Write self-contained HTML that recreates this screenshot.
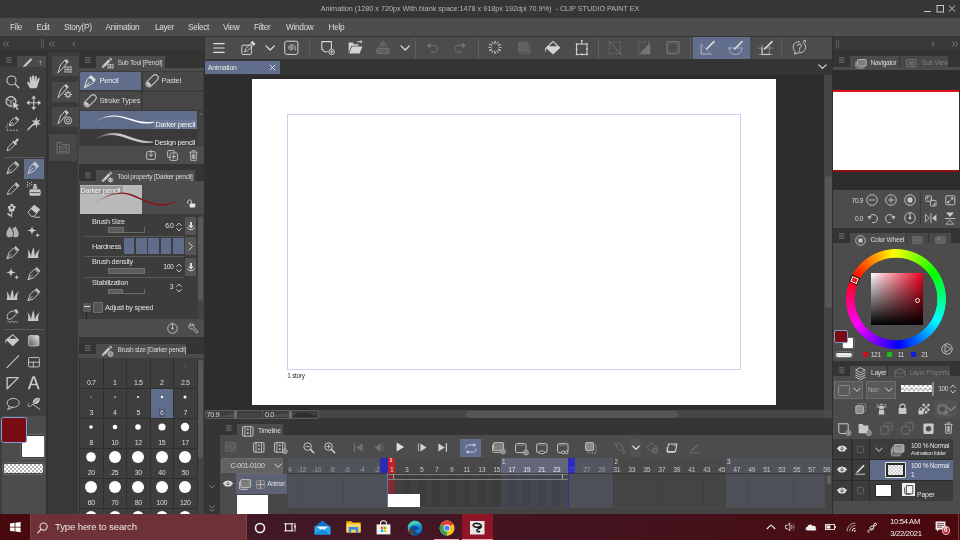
<!DOCTYPE html>
<html><head><meta charset="utf-8"><title>CLIP STUDIO PAINT EX</title>
<style>
html,body{margin:0;padding:0;}
body{width:960px;height:540px;overflow:hidden;background:#3c3c3c;font-family:"Liberation Sans",sans-serif;position:relative;}
#root{position:absolute;left:0;top:0;width:960px;height:540px;overflow:hidden;will-change:transform;}
#root div,#root svg{position:absolute;box-sizing:border-box;}
#root svg{overflow:visible;}
</style></head><body><div id="root">
<div style="left:0px;top:0px;width:960px;height:18px;background:#363636;"></div>
<div style="left:0px;top:4.2px;font-size:8.1px;line-height:10.1px;color:#b8b8b8;white-space:nowrap;width:960px;text-align:center;transform:scaleX(0.892);transform-origin:480px 0;">Animation (1280 x 720px With blank space:1478 x 918px 192dpi 70.9%)&nbsp; - CLIP STUDIO PAINT EX</div>
<svg style="left:919.5px;top:3px;" width="36" height="12" viewBox="0 0 36 12"><path d="M4 8.5h7" stroke="#c8c8c8" stroke-width="1" fill="none"/><rect x="17" y="2.5" width="6.5" height="6.5" fill="none" stroke="#c8c8c8" stroke-width="1"/><path d="M29 2.5l6 6M35 2.5l-6 6" stroke="#c8c8c8" stroke-width="1" fill="none"/></svg>
<div style="left:0px;top:18px;width:960px;height:18px;background:#4d4d4d;"></div>
<div style="left:10px;top:22px;font-size:8.3px;line-height:10.3px;color:#dcdcdc;white-space:nowrap;letter-spacing:-0.35px;">File</div>
<div style="left:36.5px;top:22px;font-size:8.3px;line-height:10.3px;color:#dcdcdc;white-space:nowrap;letter-spacing:-0.35px;">Edit</div>
<div style="left:64px;top:22px;font-size:8.3px;line-height:10.3px;color:#dcdcdc;white-space:nowrap;letter-spacing:-0.35px;">Story(P)</div>
<div style="left:105.5px;top:22px;font-size:8.3px;line-height:10.3px;color:#dcdcdc;white-space:nowrap;letter-spacing:-0.35px;">Animation</div>
<div style="left:155px;top:22px;font-size:8.3px;line-height:10.3px;color:#dcdcdc;white-space:nowrap;letter-spacing:-0.35px;">Layer</div>
<div style="left:188px;top:22px;font-size:8.3px;line-height:10.3px;color:#dcdcdc;white-space:nowrap;letter-spacing:-0.35px;">Select</div>
<div style="left:223px;top:22px;font-size:8.3px;line-height:10.3px;color:#dcdcdc;white-space:nowrap;letter-spacing:-0.35px;">View</div>
<div style="left:254px;top:22px;font-size:8.3px;line-height:10.3px;color:#dcdcdc;white-space:nowrap;letter-spacing:-0.35px;">Filter</div>
<div style="left:286px;top:22px;font-size:8.3px;line-height:10.3px;color:#dcdcdc;white-space:nowrap;letter-spacing:-0.35px;">Window</div>
<div style="left:328.5px;top:22px;font-size:8.3px;line-height:10.3px;color:#dcdcdc;white-space:nowrap;letter-spacing:-0.35px;">Help</div>
<div style="left:0px;top:36px;width:960px;height:24px;background:#383838;"></div>
<div style="left:0px;top:52px;width:46px;height:462px;background:#3e3e3e;"></div>
<div style="left:46px;top:52px;width:2px;height:462px;background:#323232;"></div>
<div style="left:0px;top:51.3px;width:204px;height:0.9px;background:#2f2f2f;"></div>
<div style="left:48px;top:52px;width:30px;height:462px;background:#383838;"></div>
<svg style="left:2.5px;top:41px;" width="6" height="6" viewBox="0 0 6 6"><path d="M2.5 0.5L0.5 3L2.5 5.5M5.5 0.5L3.5 3L5.5 5.5" stroke="#8a8a8a" stroke-width="0.8" fill="none"/></svg>
<svg style="left:49px;top:41px;" width="6" height="6" viewBox="0 0 6 6"><path d="M2.5 0.5L0.5 3L2.5 5.5M5.5 0.5L3.5 3L5.5 5.5" stroke="#8a8a8a" stroke-width="0.8" fill="none"/></svg>
<svg style="left:72px;top:41px;" width="4" height="6" viewBox="0 0 4 6"><path d="M3 0.5L1 3L3 5.5" stroke="#8a8a8a" stroke-width="0.8" fill="none"/></svg>
<div style="left:40.5px;top:39px;width:1.2px;height:9px;background:#5a5a5a;"></div>
<div style="left:42.5px;top:39px;width:1.2px;height:9px;background:#5a5a5a;"></div>
<div style="left:0px;top:52px;width:46px;height:15px;background:#343434;"></div>
<div style="left:17px;top:56px;width:29px;height:11px;background:#4b4b4b;"></div>
<svg style="left:6px;top:57px;" width="6" height="6" viewBox="0 0 6 6"><path d="M0 0.8h5.5M0 3h5.5M0 5.2h5.5" stroke="#8c8c8c" stroke-width="0.7" fill="none"/></svg>
<svg style="left:22px;top:56.5px;" width="11" height="11" viewBox="0 0 11 11"><path d="M2.5 9 L9.5 2" stroke="#c8c8c8" stroke-width="2.2" fill="none"/><path d="M0.8 10.4 L2 8 L3.2 9.3 Z" fill="#c8c8c8"/></svg>
<div style="left:38.5px;top:58.5px;font-size:6px;line-height:8px;color:#b0b0b0;white-space:nowrap;width:3.5px;overflow:hidden;">T</div>
<div style="left:24px;top:159px;width:20px;height:19.5px;background:#626f8c;"></div>
<div style="left:4px;top:157px;width:39.5px;height:1px;background:#5c5c5c;"></div>
<div style="left:4px;top:329px;width:39.5px;height:1px;background:#5c5c5c;"></div>
<svg style="left:4.75px;top:74.25px;" width="15.5" height="15.5" viewBox="0 0 18 18"><path d="M12 12 L16 16" fill="none" stroke="#c8c8c8" stroke-width="1.6" stroke-linecap="round" stroke-linejoin="round"/><circle cx="7.5" cy="7.5" r="5.3" fill="none" stroke="#c8c8c8" stroke-width="1.2"/></svg>
<svg style="left:26.25px;top:74.25px;" width="15.5" height="15.5" viewBox="0 0 18 18"><path d="M4.5 16.5 C3 13.5 1.5 11 1.2 9.2 C2.2 8.4 3.4 9 4.6 11 L4.2 3.6 C5 2.6 6 2.8 6.3 3.8 L6.9 8 L7.2 2.2 C8 1.2 9.2 1.4 9.5 2.4 L9.6 8 L10.6 2.8 C11.5 2 12.5 2.3 12.7 3.4 L12.1 8.8 L14 5 C15 4.4 15.8 5 15.8 6 L13.8 12.5 C13.4 14.5 12.8 15.5 12 16.5 Z" fill="#c8c8c8"/></svg>
<svg style="left:4.75px;top:95.25px;" width="15.5" height="15.5" viewBox="0 0 18 18"><path d="M7 2 L12 4.5 L12 10 M7 2 L2 4.5 L2 10.5 L7 13 L7 7.5 L2 4.5 M7 7.5 L12 4.5" fill="none" stroke="#c8c8c8" stroke-width="1" stroke-linecap="round" stroke-linejoin="round"/><circle cx="7" cy="7.5" r="6" fill="none" stroke="#c8c8c8" stroke-width="0.9"/><path d="M9 8.5 L16.5 12 L13.5 13 L15.5 16.5 L14 17.3 L12 13.8 L10 16 Z" fill="#c8c8c8"/></svg>
<svg style="left:26.25px;top:95.25px;" width="15.5" height="15.5" viewBox="0 0 18 18"><path d="M9 2 L9 16 M2 9 L16 9" fill="none" stroke="#c8c8c8" stroke-width="1.3" stroke-linecap="round" stroke-linejoin="round"/><path d="M9 0.5 L11.8 4 L6.2 4 Z M9 17.5 L11.8 14 L6.2 14 Z M0.5 9 L4 6.2 L4 11.8 Z M17.5 9 L14 6.2 L14 11.8 Z" fill="#c8c8c8"/></svg>
<svg style="left:4.75px;top:116.25px;" width="15.5" height="15.5" viewBox="0 0 18 18"><path d="M5 11 L6.5 6 L11 2 L15 6 L10.5 10 Z M5 11 L9 7.5" fill="none" stroke="#c8c8c8" stroke-width="1.1" stroke-linecap="round" stroke-linejoin="round"/><path d="M11.6 1.6 L13 0.4 L16.6 4 L15.4 5.4 Z" fill="#c8c8c8"/><path d="M2 16.5 L16 16.5" stroke="#c8c8c8" stroke-width="1.1" stroke-dasharray="2 1.6" fill="none"/><path d="M3.5 9 C1.5 11 1.5 14 3.5 15" stroke="#c8c8c8" stroke-width="1" stroke-dasharray="1.6 1.4" fill="none"/></svg>
<svg style="left:26.25px;top:116.25px;" width="15.5" height="15.5" viewBox="0 0 18 18"><path d="M2 16 L9 9" fill="none" stroke="#c8c8c8" stroke-width="1.5" stroke-linecap="round" stroke-linejoin="round"/><path d="M12 1 L13 5.5 L17 4 L14.2 7.5 L17.5 10 L13.2 10 L12.5 14 L11 10.2 L7 11.5 L9.8 8 L6.5 5 L10.8 5.6 Z" fill="#c8c8c8"/></svg>
<svg style="left:4.75px;top:137.25px;" width="15.5" height="15.5" viewBox="0 0 18 18"><path d="M2.5 15.5 L3.5 12 L9.5 6 L12 8.5 L6 14.5 Z" fill="none" stroke="#c8c8c8" stroke-width="1.1" stroke-linecap="round" stroke-linejoin="round"/><path d="M8.5 5.5 L10 4 L11.2 5.2 L13.5 2 C14.8 1 16.5 2.6 15.6 4 L12.8 6.8 L14 8 L12.5 9.5 Z" fill="#c8c8c8"/></svg>
<svg style="left:4.75px;top:160.25px;" width="15.5" height="15.5" viewBox="0 0 18 18"><path d="M2.5 15.5 L4.5 9 L10 3.5 L14.5 8 L9 13.5 Z M2.5 15.5 L7 11" fill="none" stroke="#c8c8c8" stroke-width="1.1" stroke-linecap="round" stroke-linejoin="round"/><path d="M10.6 2.9 L12.3 1.2 L16.8 5.7 L15.1 7.4 Z" fill="#c8c8c8"/></svg>
<svg style="left:26.25px;top:160.25px;" width="15.5" height="15.5" viewBox="0 0 18 18"><path d="M2.5 15.5 L5.5 7 L10.5 2.5 L14.5 7 L9.5 12.5 Z M2.5 15.5 L8 9.5" fill="none" stroke="#c8c8c8" stroke-width="1.1" stroke-linecap="round" stroke-linejoin="round"/><path d="M7.2 5.5 L10.5 2.5 L14.5 7 L11.5 10.2 L10.6 6.8 Z" fill="#c8c8c8"/></svg>
<svg style="left:4.75px;top:181.25px;" width="15.5" height="15.5" viewBox="0 0 18 18"><path d="M3 15.5 C3 12 5 10 7 8.5 L11 4 L14.5 7.5 L10 11.5 C8.5 13.5 6.5 15.5 3 15.5 Z" fill="none" stroke="#c8c8c8" stroke-width="1.1" stroke-linecap="round" stroke-linejoin="round"/><path d="M11.2 3.2 L13 1.4 L17 5.4 L15.2 7.2 Z" fill="#c8c8c8"/></svg>
<svg style="left:26.25px;top:181.25px;" width="15.5" height="15.5" viewBox="0 0 18 18"><path d="M6 9.5 L15 9.5 C16.5 9.5 17 10.5 17 12 L17 15.5 C17 16.5 16.5 17 15.5 17 L5.5 17 C4.5 17 4 16.5 4 15.5 L4 12 C4 10.5 4.5 9.5 6 9.5 Z M8 6.5 L13 6.5 L13 9 L8 9 Z M9 3.5 L12 3.5 L12 6 L9 6 Z" fill="#c8c8c8"/><path d="M5 13.5 L16 13.5" stroke="#3e3e3e" stroke-width="1"/><path d="M1 1 h1.2v1.2h-1.2z M3.5 2.2 h1.2v1.2h-1.2z M1 3.6 h1.2v1.2h-1.2z M6 3.4 h1.2v1.2h-1.2z M3.5 4.8 h1.2v1.2h-1.2z M1 6.2 h1.2v1.2h-1.2z M6 1 h1.2v1.2h-1.2z" fill="#c8c8c8"/></svg>
<svg style="left:4.75px;top:202.75px;" width="15.5" height="15.5" viewBox="0 0 18 18"><path d="M8 1 C9.5 1 10 2.5 9.6 3.6 C10.8 2.8 12.4 3.4 12.4 5 C12.4 6.4 11.2 6.8 10.2 6.8 C11.4 7.6 11.4 9.4 10 9.9 C8.8 10.3 8 9.4 7.7 8.6 C7.4 9.8 6 10.6 4.9 9.7 C3.9 8.8 4.4 7.6 5.2 7 C4 7 2.9 6 3.3 4.7 C3.8 3.4 5.2 3.4 6.2 3.8 C5.6 2.6 6.4 1 8 1 Z" fill="#c8c8c8"/><circle cx="7.8" cy="5.6" r="1.5" fill="#3e3e3e"/><path d="M7.8 10 L7.8 16" fill="none" stroke="#c8c8c8" stroke-width="1.2" stroke-linecap="round" stroke-linejoin="round"/><path d="M7.5 15.5 C5 15.5 3 14 2.5 11.5 C5 11.5 7 13 7.5 15.5 Z" fill="#c8c8c8"/></svg>
<svg style="left:26.25px;top:202.75px;" width="15.5" height="15.5" viewBox="0 0 18 18"><path d="M2.5 10.5 L9.5 2.5 L16 7.5 L9.5 15.5 L6.5 15.5 Z M10 16.5 L16 16.5" fill="none" stroke="#c8c8c8" stroke-width="1.1" stroke-linecap="round" stroke-linejoin="round"/><path d="M5.5 7 L9.5 2.5 L16 7.5 L12 12.3 Z" fill="#c8c8c8"/></svg>
<svg style="left:4.75px;top:223.75px;" width="15.5" height="15.5" viewBox="0 0 18 18"><path d="M5.5 3 C7.5 6 9.5 8.5 9.5 11.5 C9.5 14 7.7 15.5 5.5 15.5 C3.3 15.5 1.5 14 1.5 11.5 C1.5 8.5 3.5 6 5.5 3 Z M12 3 C14 6 16 8.5 16 11.5 C16 14 14.2 15.5 12 15.5 C10.8 15.5 9.8 15 9.2 14.3 C10 13.5 10.4 12.6 10.4 11.5 C10.4 9.3 9.6 7.4 8.6 5.8 C10 4.4 11 3.8 12 3 Z" fill="#b0b0b0"/></svg>
<svg style="left:26.25px;top:223.75px;" width="15.5" height="15.5" viewBox="0 0 18 18"><path d="M7 1.5 C7.5 6 8.5 7 13 7.5 C8.5 8 7.5 9 7 13.5 C6.5 9 5.5 8 1 7.5 C5.5 7 6.5 6 7 1.5 Z M13.5 10 C13.8 12.2 14.3 12.7 16.5 13 C14.3 13.3 13.8 13.8 13.5 16 C13.2 13.8 12.7 13.3 10.5 13 C12.7 12.7 13.2 12.2 13.5 10 Z" fill="#c8c8c8"/></svg>
<svg style="left:4.75px;top:244.75px;" width="15.5" height="15.5" viewBox="0 0 18 18"><path d="M2.5 15.5 L4.5 9 L10 3.5 L14.5 8 L9 13.5 Z M2.5 15.5 L7 11" fill="none" stroke="#c8c8c8" stroke-width="1.1" stroke-linecap="round" stroke-linejoin="round"/><path d="M10.6 2.9 L12.3 1.2 L16.8 5.7 L15.1 7.4 Z" fill="#c8c8c8"/></svg>
<svg style="left:26.25px;top:244.75px;" width="15.5" height="15.5" viewBox="0 0 18 18"><path d="M2 15 C3 11 3 8 1.5 5 C4.5 7.5 5.5 11 5.8 14 C6.2 10 7 6 9 2.5 C9.5 6.5 10 10 10.4 14 C11 10.5 12.5 7.5 16 5 C14 8.5 13.8 11.5 14.5 15 Z" fill="#c8c8c8"/></svg>
<svg style="left:4.75px;top:265.75px;" width="15.5" height="15.5" viewBox="0 0 18 18"><path d="M7 1.5 C7.5 6 8.5 7 13 7.5 C8.5 8 7.5 9 7 13.5 C6.5 9 5.5 8 1 7.5 C5.5 7 6.5 6 7 1.5 Z M13.5 10 C13.8 12.2 14.3 12.7 16.5 13 C14.3 13.3 13.8 13.8 13.5 16 C13.2 13.8 12.7 13.3 10.5 13 C12.7 12.7 13.2 12.2 13.5 10 Z" fill="#c8c8c8"/></svg>
<svg style="left:26.25px;top:265.75px;" width="15.5" height="15.5" viewBox="0 0 18 18"><path d="M2.5 15.5 L4.5 9 L10 3.5 L14.5 8 L9 13.5 Z M2.5 15.5 L7 11" fill="none" stroke="#c8c8c8" stroke-width="1.1" stroke-linecap="round" stroke-linejoin="round"/><path d="M10.6 2.9 L12.3 1.2 L16.8 5.7 L15.1 7.4 Z" fill="#c8c8c8"/></svg>
<svg style="left:4.75px;top:286.75px;" width="15.5" height="15.5" viewBox="0 0 18 18"><path d="M2 15 C3 11 3 8 1.5 5 C4.5 7.5 5.5 11 5.8 14 C6.2 10 7 6 9 2.5 C9.5 6.5 10 10 10.4 14 C11 10.5 12.5 7.5 16 5 C14 8.5 13.8 11.5 14.5 15 Z" fill="#c8c8c8"/></svg>
<svg style="left:26.25px;top:286.75px;" width="15.5" height="15.5" viewBox="0 0 18 18"><path d="M2.5 15.5 L4.5 9 L10 3.5 L14.5 8 L9 13.5 Z M2.5 15.5 L7 11" fill="none" stroke="#c8c8c8" stroke-width="1.1" stroke-linecap="round" stroke-linejoin="round"/><path d="M10.6 2.9 L12.3 1.2 L16.8 5.7 L15.1 7.4 Z" fill="#c8c8c8"/></svg>
<svg style="left:4.75px;top:307.75px;" width="15.5" height="15.5" viewBox="0 0 18 18"><path d="M3 12.5 C1.5 9.5 3 5.5 7 4.2 L11 3 L13.5 6.5 L10 10.5 C7.5 13.2 4.5 13.8 3 12.5 Z" fill="none" stroke="#c8c8c8" stroke-width="1.1" stroke-linecap="round" stroke-linejoin="round"/><path d="M11.2 2.6 L12.8 0.8 L16 4.8 L14 6.4 Z" fill="#c8c8c8"/><path d="M3 16 q1 -2 2 0 t2 0 t2 0 t2 0 t2 0 t2 0" stroke="#c8c8c8" stroke-width="0.9" fill="none"/></svg>
<svg style="left:26.25px;top:307.75px;" width="15.5" height="15.5" viewBox="0 0 18 18"><path d="M2 15 C3 11 3 8 1.5 5 C4.5 7.5 5.5 11 5.8 14 C6.2 10 7 6 9 2.5 C9.5 6.5 10 10 10.4 14 C11 10.5 12.5 7.5 16 5 C14 8.5 13.8 11.5 14.5 15 Z" fill="#c8c8c8"/></svg>
<svg style="left:4.75px;top:333.25px;" width="15.5" height="15.5" viewBox="0 0 18 18"><path d="M9 1.2 L16.5 8.2 L9 15.5 L1.8 8.6 C1 10 0.8 11.5 1.6 13 C-0.4 11 -0.2 8.6 1.5 7.4 Z" fill="#c8c8c8"/><path d="M9 2.6 L5 6.6 L13.2 6.6 Z" fill="#3e3e3e"/></svg>
<svg style="left:26.25px;top:333.25px;" width="15.5" height="15.5" viewBox="0 0 18 18"><defs><linearGradient id="gsq" x1="1" y1="0" x2="0" y2="1"><stop offset="0" stop-color="#e8e8e8"/><stop offset="1" stop-color="#555"/></linearGradient></defs><rect x="3" y="3" width="12" height="12" rx="1.5" fill="url(#gsq)" stroke="#c8c8c8" stroke-width="1"/></svg>
<svg style="left:4.75px;top:354.25px;" width="15.5" height="15.5" viewBox="0 0 18 18"><path d="M2 16 L16 2" fill="none" stroke="#c8c8c8" stroke-width="1.2" stroke-linecap="round" stroke-linejoin="round"/></svg>
<svg style="left:26.25px;top:354.25px;" width="15.5" height="15.5" viewBox="0 0 18 18"><rect x="3" y="4" width="12.5" height="11" rx="1.2" fill="none" stroke="#c8c8c8" stroke-width="1.1"/><path d="M3 9.5 L15.5 9.5 M8.5 9.5 L8.5 15" fill="none" stroke="#c8c8c8" stroke-width="1.1" stroke-linecap="round" stroke-linejoin="round"/></svg>
<svg style="left:4.75px;top:375.25px;" width="15.5" height="15.5" viewBox="0 0 18 18"><path d="M2.5 3 L15.5 3 L2.5 16 Z" fill="none" stroke="#c8c8c8" stroke-width="1.5" stroke-linecap="round" stroke-linejoin="round"/></svg>
<svg style="left:26.25px;top:375.25px;" width="15.5" height="15.5" viewBox="0 0 18 18"><path d="M7.6 1.5 L10.4 1.5 L16 16.5 L13.6 16.5 L12 12 L6 12 L4.4 16.5 L2 16.5 Z M6.7 10.2 L11.3 10.2 L9 3.6 Z" fill="#c8c8c8"/></svg>
<svg style="left:4.75px;top:396.25px;" width="15.5" height="15.5" viewBox="0 0 18 18"><ellipse cx="9.5" cy="8" rx="7" ry="5.2" fill="none" stroke="#c8c8c8" stroke-width="1.1"/><path d="M5 12 L3 16 L9 13" fill="none" stroke="#c8c8c8" stroke-width="1.1" stroke-linecap="round" stroke-linejoin="round"/></svg>
<svg style="left:26.25px;top:396.25px;" width="15.5" height="15.5" viewBox="0 0 18 18"><path d="M3 9 C1.5 11 3 13 5 12 L8 9.5 M8.5 10 L16 15.5" fill="none" stroke="#c8c8c8" stroke-width="1.1" stroke-linecap="round" stroke-linejoin="round"/><path d="M8 8.5 C7.5 5 10 2 14.5 2 C16 2 16.5 3 16 4.5 C15 8.5 12 10.5 8 8.5 Z" fill="#c8c8c8"/><path d="M9 8 L15 3" stroke="#3e3e3e" stroke-width="0.7"/></svg>
<div style="left:1.5px;top:416px;width:44.5px;height:98px;background:#4c4c4c;"></div>
<div style="left:19.7px;top:433.8px;width:25.2px;height:24.8px;background:#3a3a3a;border:0.8px solid #646464;border-radius:2px;"></div>
<div style="left:21.8px;top:436px;width:22px;height:21.4px;background:#ffffff;border-radius:1px;"></div>
<div style="left:1.2px;top:416.6px;width:25.8px;height:26.1px;background:#7a0c14;border:1.7px solid #829fda;border-radius:2.5px;"></div>
<div style="left:2px;top:461.5px;width:43px;height:13.8px;background:#4c4c4c;border:0.8px solid #626262;border-radius:3px;"></div>
<div style="left:4px;top:464px;width:39px;height:9px;background:#ffffff;border-radius:1.5px;background-image:conic-gradient(#b4b4b4 25%,#fff 0 50%,#b4b4b4 0 75%,#fff 0);background-size:4px 4px;"></div>
<div style="left:48px;top:52px;width:30px;height:79px;background:#3a3a3a;"></div>
<div style="left:52px;top:56px;width:26px;height:20px;background:#484848;border-radius:2px 0 0 2px;"></div>
<div style="left:52px;top:81.5px;width:26px;height:20px;background:#484848;border-radius:2px 0 0 2px;"></div>
<div style="left:52px;top:107px;width:26px;height:20px;background:#484848;border-radius:2px 0 0 2px;"></div>
<svg style="left:56px;top:57.5px;" width="18" height="17" viewBox="0 0 18 17"><path d="M2 14.5 L4.5 7 L8.5 2.5 L11 5 L6 11 Z" fill="none" stroke="#c8c8c8" stroke-width="1.0" stroke-linecap="round" stroke-linejoin="round"/><path d="M8.5 2.5 L10 1 L13 4 L11 5.2 Z" fill="#c8c8c8"/><path d="M9 8.5 L9 14 M9 9 L15 9 M9 11.5 L15 11.5 M9 14 L15 14 M12 9 L12 14 M15 8.5 L15 14.5" fill="none" stroke="#c8c8c8" stroke-width="0.8" stroke-linecap="round" stroke-linejoin="round"/></svg>
<svg style="left:56px;top:83px;" width="18" height="17" viewBox="0 0 18 17"><path d="M2 14.5 L4.5 7 L8.5 2.5 L11 5 L6 11 Z" fill="none" stroke="#c8c8c8" stroke-width="1.0" stroke-linecap="round" stroke-linejoin="round"/><path d="M8.5 2.5 L10 1 L13 4 L11 5.2 Z" fill="#c8c8c8"/><circle cx="12" cy="11.5" r="2.3" fill="none" stroke="#c8c8c8" stroke-width="1"/><path d="M12 7.5v8M8 11.5h8M9.2 8.7l5.6 5.6M14.8 8.7l-5.6 5.6" stroke="#c8c8c8" stroke-width="0.9"/><circle cx="12" cy="11.5" r="1.3" fill="#484848"/></svg>
<svg style="left:56px;top:108.5px;" width="18" height="17" viewBox="0 0 18 17"><path d="M2 14.5 L4.5 7 L8.5 2.5 L11 5 L6 11 Z" fill="none" stroke="#c8c8c8" stroke-width="1.0" stroke-linecap="round" stroke-linejoin="round"/><path d="M8.5 2.5 L10 1 L13 4 L11 5.2 Z" fill="#c8c8c8"/><circle cx="12" cy="11.5" r="3.6" fill="none" stroke="#c8c8c8" stroke-width="0.9"/><circle cx="12" cy="11.5" r="1.6" fill="none" stroke="#c8c8c8" stroke-width="0.9"/></svg>
<div style="left:49px;top:134px;width:28px;height:27px;background:#474747;"></div>
<svg style="left:56px;top:141px;" width="14" height="13" viewBox="0 0 14 13"><path d="M1 3.5 L1 1.5 L5 1.5 L6 3.5 L13 3.5 L13 12 L1 12 Z" fill="none" stroke="#707070" stroke-width="1"/><rect x="3.5" y="5.5" width="7" height="5" fill="none" stroke="#707070" stroke-width="0.8"/><path d="M3.5 7.5h7M6 7.5v3" stroke="#707070" stroke-width="0.7"/></svg>
<div style="left:78px;top:52px;width:126px;height:462px;background:#3c3c3c;"></div>
<div style="left:78px;top:52px;width:1px;height:462px;background:#4a4a4a;"></div>
<div style="left:79px;top:52px;width:125px;height:16px;background:#343434;"></div>
<svg style="left:85px;top:57px;" width="6" height="6" viewBox="0 0 6 6"><path d="M0 0.8h5.5M0 3h5.5M0 5.2h5.5" stroke="#8c8c8c" stroke-width="0.7" fill="none"/></svg>
<div style="left:96px;top:56.3px;width:68.5px;height:12px;background:#4c4c4c;"></div>
<div style="left:79px;top:67.5px;width:125px;height:3.3px;background:#4c4c4c;"></div>
<svg style="left:101px;top:57px;" width="13" height="12" viewBox="0 0 13 12"><path d="M0.6 11.2 L1.8 7.8 L3.9 9.9 Z" fill="#c8c8c8"/><path d="M3 8.8 L8.6 3.2" stroke="#c8c8c8" stroke-width="2.6"/><path d="M8.3 1.5 L9.3 0.5 L11.3 2.5 L10.3 3.5 Z" fill="#c8c8c8"/><path d="M7 7 L7 11 M7 7.5 L12 7.5 M7 9.3 L12 9.3 M7 11 L12 11 M9.5 7.5 L9.5 11 M12 7 L12 11.3" fill="none" stroke="#c8c8c8" stroke-width="0.7" stroke-linecap="round" stroke-linejoin="round"/></svg>
<div style="left:117.5px;top:59px;font-size:6.6px;line-height:8.6px;color:#d6d6d6;white-space:nowrap;letter-spacing:-0.25px;">Sub Tool [Pencil]</div>
<div style="left:80.3px;top:71.7px;width:60.7px;height:18.3px;background:#626f8c;border-radius:1.5px;"></div>
<div style="left:142.5px;top:71.7px;width:60px;height:18.3px;background:#484848;border-radius:1.5px;"></div>
<div style="left:80.3px;top:91.7px;width:60.7px;height:18.3px;background:#484848;border-radius:1.5px;"></div>
<div style="left:142.5px;top:91.7px;width:60.5px;height:18.3px;background:#464646;"></div>
<svg style="left:82.5px;top:73.5px;" width="14" height="15" viewBox="0 0 14 15"><path d="M1.5 13.5 L4 5.5 L8 1.5 L12.5 6 L8.5 10 Z M1.5 13.5 L6.5 8.5" fill="none" stroke="#e0e0e0" stroke-width="1.0" stroke-linecap="round" stroke-linejoin="round"/><path d="M5.6 4 L8 1.5 L12.5 6 L10 8.6 L9.2 5.6 Z" fill="#e0e0e0"/></svg>
<div style="left:99.5px;top:76.3px;font-size:7.5px;line-height:9.5px;color:#e8e8e8;white-space:nowrap;letter-spacing:-0.25px;">Pencil</div>
<svg style="left:145px;top:73.8px;" width="14" height="14" viewBox="0 0 14 14"><g transform="rotate(-45 7 7)"><rect x="0" y="4" width="14.5" height="6" rx="3" fill="none" stroke="#c8c8c8" stroke-width="1"/><ellipse cx="2.6" cy="7" rx="1.6" ry="2.5" fill="#c8c8c8"/></g></svg>
<div style="left:161.5px;top:76.3px;font-size:7.5px;line-height:9.5px;color:#d8d8d8;white-space:nowrap;letter-spacing:-0.25px;">Pastel</div>
<svg style="left:83px;top:93.8px;" width="14" height="14" viewBox="0 0 14 14"><g transform="rotate(-45 7 7)"><rect x="0" y="4" width="14.5" height="6" rx="3" fill="none" stroke="#c8c8c8" stroke-width="1"/><ellipse cx="2.6" cy="7" rx="1.6" ry="2.5" fill="#c8c8c8"/></g></svg>
<div style="left:99.5px;top:96px;font-size:7.5px;line-height:9.5px;color:#d8d8d8;white-space:nowrap;letter-spacing:-0.25px;">Stroke Types</div>
<div style="left:80px;top:111.3px;width:117px;height:17.5px;background:#606d8a;"></div>
<div style="left:80px;top:130px;width:117px;height:16px;background:#3a3a3a;"></div>
<div style="left:197.5px;top:111px;width:6.5px;height:35px;background:#424242;"></div>
<div style="left:199.5px;top:113px;width:2px;height:2px;background:#6a6a6a;border-radius:1px;"></div>
<svg style="left:80px;top:111px;" width="117" height="18" viewBox="0 0 117 18"><defs><linearGradient id="fa" x1="0" y1="0" x2="1" y2="0"><stop offset="0" stop-color="#fff" stop-opacity="0.15"/><stop offset="0.3" stop-color="#fff" stop-opacity="1"/><stop offset="0.8" stop-color="#fff" stop-opacity="1"/><stop offset="1" stop-color="#fff" stop-opacity="0.3"/></linearGradient></defs><path d="M12 12 C20 7.5 27 5.2 34 5.4 C44 5.8 54 11.4 64 12.4 C72 13 78 11 84 8 C78 10.4 72 11.6 64 10.8 C54 9.6 44 4.4 34 4.4 C27 4.4 20 7 12 12 Z" fill="url(#fa)"/></svg>
<svg style="left:80px;top:129.5px;" width="117" height="18" viewBox="0 0 117 18"><defs><linearGradient id="fb" x1="0" y1="0" x2="1" y2="0"><stop offset="0" stop-color="#ddd" stop-opacity="0.1"/><stop offset="0.35" stop-color="#ddd" stop-opacity="0.9"/><stop offset="0.85" stop-color="#ddd" stop-opacity="0.9"/><stop offset="1" stop-color="#ddd" stop-opacity="0.3"/></linearGradient></defs><path d="M17 8.5 C23 5.4 28 4.8 33 5 C43 5.6 52 11 62 12.6 C69 13.2 74 12.4 80 11 C74 11.6 69 11.8 62 10.4 C52 8.4 43 3 33 3 C28 3 23 4.6 17 8.5 Z" fill="url(#fb)" stroke="#bdbdbd" stroke-width="0.5" stroke-dasharray="1.2 0.8" stroke-opacity="0.6"/></svg>
<div style="left:154px;top:120px;width:42.5px;height:8.5px;background:#6b7894;"></div>
<div style="left:155.5px;top:119.6px;font-size:7.3px;line-height:9.3px;color:#f2f2f2;white-space:nowrap;letter-spacing:-0.25px;">Darker pencil</div>
<div style="left:153px;top:138px;width:43.5px;height:9px;background:#3c3c3c;"></div>
<div style="left:154.5px;top:137.6px;font-size:7.3px;line-height:9.3px;color:#ececec;white-space:nowrap;letter-spacing:-0.25px;">Design pencil</div>
<div style="left:79px;top:146px;width:125px;height:18.3px;background:#4c4c4c;"></div>
<svg style="left:146px;top:150px;" width="10" height="10" viewBox="0 0 10 10"><rect x="0.6" y="1.6" width="8.8" height="7.8" rx="1.2" fill="none" stroke="#c8c8c8" stroke-width="0.9"/><path d="M5 0.3 L5 6.2 M3 4.4 L5 6.4 L7 4.4" fill="none" stroke="#c8c8c8" stroke-width="0.9" stroke-linecap="round" stroke-linejoin="round"/></svg>
<svg style="left:167px;top:149.5px;" width="11" height="11" viewBox="0 0 11 11"><rect x="0.6" y="0.6" width="7" height="7" rx="1.2" fill="none" stroke="#c8c8c8" stroke-width="0.9"/><rect x="3" y="3" width="7.4" height="7.4" rx="1.2" fill="#4c4c4c" stroke="#c8c8c8" stroke-width="0.9"/><path d="M6.7 4.8 L6.7 8.6 M4.8 6.7 L8.6 6.7" fill="none" stroke="#c8c8c8" stroke-width="0.9" stroke-linecap="round" stroke-linejoin="round"/></svg>
<svg style="left:189px;top:149.5px;" width="9" height="11" viewBox="0 0 9 11"><path d="M0.4 2.2h8.2M3 2V0.6h3V2M1.4 2.4L1.8 10.4h5.4L7.6 2.4M3.3 3.8v5.2M4.5 3.8v5.2M5.7 3.8v5.2" fill="none" stroke="#c8c8c8" stroke-width="0.8"/></svg>
<div style="left:79px;top:164.3px;width:125px;height:5px;background:#353535;"></div>
<div style="left:79px;top:169px;width:125px;height:16px;background:#343434;"></div>
<svg style="left:85px;top:171.5px;" width="6" height="6" viewBox="0 0 6 6"><path d="M0 0.8h5.5M0 3h5.5M0 5.2h5.5" stroke="#8c8c8c" stroke-width="0.7" fill="none"/></svg>
<div style="left:96px;top:170px;width:99px;height:12px;background:#4c4c4c;"></div>
<div style="left:79px;top:181px;width:125px;height:3.5px;background:#4c4c4c;"></div>
<svg style="left:101px;top:171px;" width="13" height="12" viewBox="0 0 13 12"><path d="M0.6 11.2 L1.8 7.8 L3.9 9.9 Z" fill="#c8c8c8"/><path d="M3 8.8 L8.6 3.2" stroke="#c8c8c8" stroke-width="2.6"/><path d="M8.3 1.5 L9.3 0.5 L11.3 2.5 L10.3 3.5 Z" fill="#c8c8c8"/><circle cx="9.5" cy="9" r="1.8" fill="none" stroke="#c8c8c8" stroke-width="0.8"/><path d="M9.5 6v6M6.5 9h6M7.4 6.9l4.2 4.2M11.6 6.9l-4.2 4.2" stroke="#c8c8c8" stroke-width="0.7"/></svg>
<div style="left:117.5px;top:173px;font-size:6.6px;line-height:8.6px;color:#d6d6d6;white-space:nowrap;letter-spacing:-0.25px;">Tool property [Darker pencil]</div>
<div style="left:80px;top:185.3px;width:123.5px;height:29px;background:#4c4c4c;"></div>
<div style="left:80px;top:185.3px;width:61.8px;height:29px;background:#b9b9b9;"></div>
<div style="left:80px;top:186px;width:42.5px;height:7.5px;background:#999999;"></div>
<div style="left:80.5px;top:185.5px;font-size:7.3px;line-height:9.3px;color:#f0f0f0;white-space:nowrap;letter-spacing:-0.25px;">Darker pencil</div>
<svg style="left:80px;top:185px;" width="124" height="30" viewBox="0 0 124 30"><defs><linearGradient id="fr" x1="0" y1="0" x2="1" y2="0"><stop offset="0" stop-color="#8c1018" stop-opacity="0.1"/><stop offset="0.35" stop-color="#8c1018" stop-opacity="1"/><stop offset="0.8" stop-color="#8c1018" stop-opacity="1"/><stop offset="1" stop-color="#8c1018" stop-opacity="0.15"/></linearGradient></defs><path d="M12 21 C22 13 32 8.6 42 8.8 C54 9.2 64 18.6 78 20.6 C90 21.6 100 16 108 11 C100 15 90 20 78 19 C64 17 54 7.6 42 7.6 C32 7.6 22 12 12 21 Z" fill="url(#fr)"/></svg>
<svg style="left:187px;top:199px;" width="9" height="9" viewBox="0 0 9 9"><rect x="2.6" y="4.4" width="5.6" height="4" rx="0.6" fill="#e6e6e6"/><path d="M0.8 4.6V2.6C0.8 0.4 4.4 0.4 4.4 2.6V4.4" fill="none" stroke="#e6e6e6" stroke-width="0.9"/></svg>
<div style="left:79px;top:214.5px;width:119px;height:105px;background:#3c3c3c;"></div>
<div style="left:198px;top:216px;width:5.5px;height:103px;background:#444444;"></div>
<div style="left:198.3px;top:217px;width:5.2px;height:84px;background:#585858;border-radius:2.6px;"></div>
<div style="left:92px;top:216.6px;font-size:7.3px;line-height:9.3px;color:#e0e0e0;white-space:nowrap;letter-spacing:-0.25px;">Brush Size</div>
<div style="left:108px;top:227px;width:37px;height:5.5px;background:#3c3c3c;border:0.8px solid #6a6a6a;border-top:none;border-left:none;"></div><div style="left:108px;top:227px;width:15.5px;height:5.5px;background:#5c5c5c;border:0.8px solid #707070;"></div>
<div style="left:160px;top:221.5px;font-size:6.8px;line-height:8.8px;color:#e0e0e0;white-space:nowrap;width:13.5px;text-align:right;letter-spacing:-0.4px;">6.0</div>
<svg style="left:175.5px;top:221.5px;" width="6" height="10" viewBox="0 0 6 10"><path d="M0.7 3.6 L3 1 L5.3 3.6 M0.7 6.4 L3 9 L5.3 6.4" fill="none" stroke="#d0d0d0" stroke-width="0.9" stroke-linecap="round" stroke-linejoin="round"/></svg>
<div style="left:184.5px;top:217px;width:11.5px;height:18px;background:#565656;border-radius:1.5px;"></div><svg style="left:186.5px;top:221.5px;" width="8" height="9" viewBox="0 0 8 9"><path d="M3 0h2v3.6h1.8L4 6.6 1.2 3.6H3z" fill="#dcdcdc"/><path d="M0.5 5.8 C1.5 8.4 6.5 8.4 7.5 5.8" fill="none" stroke="#dcdcdc" stroke-width="0.9" stroke-linecap="round" stroke-linejoin="round"/></svg>
<div style="left:85px;top:236px;width:99px;height:0.8px;background:#5a5a5a;"></div>
<div style="left:92px;top:242px;font-size:7.3px;line-height:9.3px;color:#e0e0e0;white-space:nowrap;letter-spacing:-0.25px;">Hardness</div>
<div style="left:123.5px;top:238px;width:10.8px;height:16px;background:#606d8a;"></div>
<div style="left:135.9px;top:238px;width:10.8px;height:16px;background:#606d8a;"></div>
<div style="left:148.3px;top:238px;width:10.8px;height:16px;background:#606d8a;"></div>
<div style="left:160.7px;top:238px;width:10.8px;height:16px;background:#606d8a;"></div>
<div style="left:173.1px;top:238px;width:10.8px;height:16px;background:#606d8a;"></div>
<div style="left:185px;top:237px;width:11px;height:18px;background:#565656;border-radius:1.5px;"></div>
<svg style="left:188px;top:242px;" width="6" height="9" viewBox="0 0 6 9"><path d="M1 0.8 L4.6 4.4 L1 8" fill="none" stroke="#dcdcdc" stroke-width="1" stroke-linecap="round" stroke-linejoin="round"/></svg>
<div style="left:85px;top:256px;width:99px;height:0.8px;background:#5a5a5a;"></div>
<div style="left:92px;top:257.2px;font-size:7.3px;line-height:9.3px;color:#e0e0e0;white-space:nowrap;letter-spacing:-0.25px;">Brush density</div>
<div style="left:108px;top:267.5px;width:37px;height:6.5px;background:#3c3c3c;border:0.8px solid #6a6a6a;border-top:none;border-left:none;"></div><div style="left:108px;top:267.5px;width:37px;height:6.5px;background:#5c5c5c;border:0.8px solid #707070;"></div>
<div style="left:160px;top:262.5px;font-size:6.8px;line-height:8.8px;color:#e0e0e0;white-space:nowrap;width:13.5px;text-align:right;letter-spacing:-0.4px;">100</div>
<svg style="left:175.5px;top:262.5px;" width="6" height="10" viewBox="0 0 6 10"><path d="M0.7 3.6 L3 1 L5.3 3.6 M0.7 6.4 L3 9 L5.3 6.4" fill="none" stroke="#d0d0d0" stroke-width="0.9" stroke-linecap="round" stroke-linejoin="round"/></svg>
<div style="left:184.5px;top:258px;width:11.5px;height:18px;background:#565656;border-radius:1.5px;"></div><svg style="left:186.5px;top:262.5px;" width="8" height="9" viewBox="0 0 8 9"><path d="M3 0h2v3.6h1.8L4 6.6 1.2 3.6H3z" fill="#dcdcdc"/><path d="M0.5 5.8 C1.5 8.4 6.5 8.4 7.5 5.8" fill="none" stroke="#dcdcdc" stroke-width="0.9" stroke-linecap="round" stroke-linejoin="round"/></svg>
<div style="left:85px;top:277px;width:99px;height:0.8px;background:#5a5a5a;"></div>
<div style="left:92px;top:278px;font-size:7.3px;line-height:9.3px;color:#e0e0e0;white-space:nowrap;letter-spacing:-0.25px;">Stabilization</div>
<div style="left:108px;top:288.5px;width:37px;height:5.5px;background:#3c3c3c;border:0.8px solid #6a6a6a;border-top:none;border-left:none;"></div><div style="left:108px;top:288.5px;width:15px;height:5.5px;background:#5c5c5c;border:0.8px solid #707070;"></div>
<div style="left:160px;top:283px;font-size:6.8px;line-height:8.8px;color:#e0e0e0;white-space:nowrap;width:13.5px;text-align:right;">3</div>
<svg style="left:175.5px;top:283px;" width="6" height="10" viewBox="0 0 6 10"><path d="M0.7 3.6 L3 1 L5.3 3.6 M0.7 6.4 L3 9 L5.3 6.4" fill="none" stroke="#d0d0d0" stroke-width="0.9" stroke-linecap="round" stroke-linejoin="round"/></svg>
<div style="left:82.5px;top:302.5px;width:8.5px;height:9px;background:#5a5a5a;border-radius:1px;"></div>
<div style="left:84px;top:306.4px;width:5.5px;height:1px;background:#d8d8d8;"></div>
<div style="left:92.5px;top:302px;width:10.5px;height:10.5px;background:#555555;border:0.8px solid #6e6e6e;border-radius:1px;"></div>
<div style="left:105px;top:303px;font-size:7.3px;line-height:9.3px;color:#e0e0e0;white-space:nowrap;letter-spacing:-0.25px;">Adjust by speed</div>
<div style="left:85.5px;top:312px;width:0.8px;height:7px;background:#222;"></div>
<div style="left:79px;top:319px;width:125px;height:17.7px;background:#4c4c4c;"></div>
<svg style="left:166.5px;top:322.5px;" width="11" height="11" viewBox="0 0 11 11"><circle cx="5.5" cy="5.5" r="4.8" fill="none" stroke="#c8c8c8" stroke-width="0.9"/><circle cx="5.5" cy="5.5" r="1.1" fill="#c8c8c8"/><path d="M5.5 0.3 L5.5 4.6" fill="none" stroke="#c8c8c8" stroke-width="0.9" stroke-linecap="round" stroke-linejoin="round"/></svg>
<svg style="left:187.5px;top:322.5px;" width="11" height="11" viewBox="0 0 11 11"><path d="M3.2 0.8 C1.4 1 0.4 2.8 1 4.4 C1.6 5.8 3.2 6.2 4.4 5.6 L8 9.6 C9 10.6 10.6 9.2 9.6 8.2 L5.8 4.4 C6.4 3 5.8 1.4 4.6 0.9 L4.6 2.8 L3.2 3.4 L2.2 2.6 Z" fill="none" stroke="#c8c8c8" stroke-width="0.9" stroke-linejoin="round"/></svg>
<div style="left:79px;top:336.7px;width:125px;height:6px;background:#353535;"></div>
<div style="left:79px;top:342.5px;width:125px;height:15px;background:#343434;"></div>
<svg style="left:85px;top:344.5px;" width="6" height="6" viewBox="0 0 6 6"><path d="M0 0.8h5.5M0 3h5.5M0 5.2h5.5" stroke="#8c8c8c" stroke-width="0.7" fill="none"/></svg>
<div style="left:96px;top:343.5px;width:90px;height:12px;background:#4c4c4c;"></div>
<div style="left:79px;top:354px;width:125px;height:3.5px;background:#4c4c4c;"></div>
<svg style="left:101px;top:344.5px;" width="13" height="12" viewBox="0 0 13 12"><path d="M0.6 11.2 L1.8 7.8 L3.9 9.9 Z" fill="#c8c8c8"/><path d="M3 8.8 L8.6 3.2" stroke="#c8c8c8" stroke-width="2.6"/><path d="M8.3 1.5 L9.3 0.5 L11.3 2.5 L10.3 3.5 Z" fill="#c8c8c8"/><circle cx="9.5" cy="9" r="2.6" fill="#909090" stroke="#c8c8c8" stroke-width="0.6"/></svg>
<div style="left:117.5px;top:346.3px;font-size:6.6px;line-height:8.6px;color:#d6d6d6;white-space:nowrap;letter-spacing:-0.25px;">Brush size [Darker pencil]</div>
<div style="left:79px;top:357.5px;width:119px;height:157px;background:#2f2f2f;"></div>
<div style="left:198px;top:358px;width:5.5px;height:156px;background:#444444;"></div>
<div style="left:198.3px;top:360px;width:5.2px;height:97.5px;background:#585858;border-radius:2.6px;"></div>
<div style="left:80px;top:358px;width:22.7px;height:29.7px;background:#3e3e3e;"></div>
<svg style="left:83.35px;top:358.2px;" width="16" height="16" viewBox="0 0 16 16"><circle cx="8" cy="8" r="0.30" fill="#a0a0a0"/></svg>
<div style="left:80px;top:377.5px;font-size:7px;line-height:9px;color:#dcdcdc;white-space:nowrap;width:22.7px;text-align:center;letter-spacing:-0.4px;">0.7</div>
<div style="left:103.5px;top:358px;width:22.7px;height:29.7px;background:#3e3e3e;"></div>
<svg style="left:106.85px;top:358.2px;" width="16" height="16" viewBox="0 0 16 16"><circle cx="8" cy="8" r="0.40" fill="#a0a0a0"/></svg>
<div style="left:103.5px;top:377.5px;font-size:7px;line-height:9px;color:#dcdcdc;white-space:nowrap;width:22.7px;text-align:center;letter-spacing:-0.4px;">1</div>
<div style="left:127px;top:358px;width:22.7px;height:29.7px;background:#3e3e3e;"></div>
<svg style="left:130.35px;top:358.2px;" width="16" height="16" viewBox="0 0 16 16"><circle cx="8" cy="8" r="0.40" fill="#a0a0a0"/></svg>
<div style="left:127px;top:377.5px;font-size:7px;line-height:9px;color:#dcdcdc;white-space:nowrap;width:22.7px;text-align:center;letter-spacing:-0.4px;">1.5</div>
<div style="left:150.5px;top:358px;width:22.7px;height:29.7px;background:#3e3e3e;"></div>
<svg style="left:153.85px;top:358.2px;" width="16" height="16" viewBox="0 0 16 16"><circle cx="8" cy="8" r="0.40" fill="#a0a0a0"/></svg>
<div style="left:150.5px;top:377.5px;font-size:7px;line-height:9px;color:#dcdcdc;white-space:nowrap;width:22.7px;text-align:center;letter-spacing:-0.4px;">2</div>
<div style="left:174px;top:358px;width:22.7px;height:29.7px;background:#3e3e3e;"></div>
<svg style="left:177.35px;top:358.2px;" width="16" height="16" viewBox="0 0 16 16"><circle cx="8" cy="8" r="0.50" fill="#a0a0a0"/></svg>
<div style="left:174px;top:377.5px;font-size:7px;line-height:9px;color:#dcdcdc;white-space:nowrap;width:22.7px;text-align:center;letter-spacing:-0.4px;">2.5</div>
<div style="left:80px;top:388.5px;width:22.7px;height:29.2px;background:#3e3e3e;"></div>
<svg style="left:83.35px;top:388.7px;" width="16" height="16" viewBox="0 0 16 16"><circle cx="8" cy="8" r="0.60" fill="#ffffff"/></svg>
<div style="left:80px;top:408.0px;font-size:7px;line-height:9px;color:#dcdcdc;white-space:nowrap;width:22.7px;text-align:center;letter-spacing:-0.4px;">3</div>
<div style="left:103.5px;top:388.5px;width:22.7px;height:29.2px;background:#3e3e3e;"></div>
<svg style="left:106.85px;top:388.7px;" width="16" height="16" viewBox="0 0 16 16"><circle cx="8" cy="8" r="0.80" fill="#ffffff"/></svg>
<div style="left:103.5px;top:408.0px;font-size:7px;line-height:9px;color:#dcdcdc;white-space:nowrap;width:22.7px;text-align:center;letter-spacing:-0.4px;">4</div>
<div style="left:127px;top:388.5px;width:22.7px;height:29.2px;background:#3e3e3e;"></div>
<svg style="left:130.35px;top:388.7px;" width="16" height="16" viewBox="0 0 16 16"><circle cx="8" cy="8" r="1.00" fill="#ffffff"/></svg>
<div style="left:127px;top:408.0px;font-size:7px;line-height:9px;color:#dcdcdc;white-space:nowrap;width:22.7px;text-align:center;letter-spacing:-0.4px;">5</div>
<div style="left:150.5px;top:388.5px;width:22.7px;height:29.2px;background:#606d8a;"></div>
<svg style="left:153.85px;top:388.7px;" width="16" height="16" viewBox="0 0 16 16"><circle cx="8" cy="8" r="1.20" fill="#ffffff"/></svg>
<div style="left:158.65px;top:408.5px;width:6.4px;height:8.6px;background:#4a546c;"></div>
<div style="left:150.5px;top:408.0px;font-size:7px;line-height:9px;color:#dcdcdc;white-space:nowrap;width:22.7px;text-align:center;letter-spacing:-0.4px;">6</div>
<div style="left:174px;top:388.5px;width:22.7px;height:29.2px;background:#3e3e3e;"></div>
<svg style="left:177.35px;top:388.7px;" width="16" height="16" viewBox="0 0 16 16"><circle cx="8" cy="8" r="1.50" fill="#ffffff"/></svg>
<div style="left:174px;top:408.0px;font-size:7px;line-height:9px;color:#dcdcdc;white-space:nowrap;width:22.7px;text-align:center;letter-spacing:-0.4px;">7</div>
<div style="left:80px;top:418.5px;width:22.7px;height:29.2px;background:#3e3e3e;"></div>
<svg style="left:83.35px;top:418.7px;" width="16" height="16" viewBox="0 0 16 16"><circle cx="8" cy="8" r="1.80" fill="#ffffff"/></svg>
<div style="left:80px;top:438.0px;font-size:7px;line-height:9px;color:#dcdcdc;white-space:nowrap;width:22.7px;text-align:center;letter-spacing:-0.4px;">8</div>
<div style="left:103.5px;top:418.5px;width:22.7px;height:29.2px;background:#3e3e3e;"></div>
<svg style="left:106.85px;top:418.7px;" width="16" height="16" viewBox="0 0 16 16"><circle cx="8" cy="8" r="2.30" fill="#ffffff"/></svg>
<div style="left:103.5px;top:438.0px;font-size:7px;line-height:9px;color:#dcdcdc;white-space:nowrap;width:22.7px;text-align:center;letter-spacing:-0.4px;">10</div>
<div style="left:127px;top:418.5px;width:22.7px;height:29.2px;background:#3e3e3e;"></div>
<svg style="left:130.35px;top:418.7px;" width="16" height="16" viewBox="0 0 16 16"><circle cx="8" cy="8" r="2.80" fill="#ffffff"/></svg>
<div style="left:127px;top:438.0px;font-size:7px;line-height:9px;color:#dcdcdc;white-space:nowrap;width:22.7px;text-align:center;letter-spacing:-0.4px;">12</div>
<div style="left:150.5px;top:418.5px;width:22.7px;height:29.2px;background:#3e3e3e;"></div>
<svg style="left:153.85px;top:418.7px;" width="16" height="16" viewBox="0 0 16 16"><circle cx="8" cy="8" r="3.60" fill="#ffffff"/></svg>
<div style="left:150.5px;top:438.0px;font-size:7px;line-height:9px;color:#dcdcdc;white-space:nowrap;width:22.7px;text-align:center;letter-spacing:-0.4px;">15</div>
<div style="left:174px;top:418.5px;width:22.7px;height:29.2px;background:#3e3e3e;"></div>
<svg style="left:177.35px;top:418.7px;" width="16" height="16" viewBox="0 0 16 16"><circle cx="8" cy="8" r="4.20" fill="#ffffff"/></svg>
<div style="left:174px;top:438.0px;font-size:7px;line-height:9px;color:#dcdcdc;white-space:nowrap;width:22.7px;text-align:center;letter-spacing:-0.4px;">17</div>
<div style="left:80px;top:448.5px;width:22.7px;height:29.2px;background:#3e3e3e;"></div>
<svg style="left:83.35px;top:448.7px;" width="16" height="16" viewBox="0 0 16 16"><circle cx="8" cy="8" r="4.80" fill="#ffffff"/></svg>
<div style="left:80px;top:468.0px;font-size:7px;line-height:9px;color:#dcdcdc;white-space:nowrap;width:22.7px;text-align:center;letter-spacing:-0.4px;">20</div>
<div style="left:103.5px;top:448.5px;width:22.7px;height:29.2px;background:#3e3e3e;"></div>
<svg style="left:106.85px;top:448.7px;" width="16" height="16" viewBox="0 0 16 16"><circle cx="8" cy="8" r="6.00" fill="#ffffff"/></svg>
<div style="left:103.5px;top:468.0px;font-size:7px;line-height:9px;color:#dcdcdc;white-space:nowrap;width:22.7px;text-align:center;letter-spacing:-0.4px;">25</div>
<div style="left:127px;top:448.5px;width:22.7px;height:29.2px;background:#3e3e3e;"></div>
<svg style="left:130.35px;top:448.7px;" width="16" height="16" viewBox="0 0 16 16"><circle cx="8" cy="8" r="6.00" fill="#ffffff"/></svg>
<div style="left:127px;top:468.0px;font-size:7px;line-height:9px;color:#dcdcdc;white-space:nowrap;width:22.7px;text-align:center;letter-spacing:-0.4px;">30</div>
<div style="left:150.5px;top:448.5px;width:22.7px;height:29.2px;background:#3e3e3e;"></div>
<svg style="left:153.85px;top:448.7px;" width="16" height="16" viewBox="0 0 16 16"><circle cx="8" cy="8" r="6.00" fill="#ffffff"/></svg>
<div style="left:150.5px;top:468.0px;font-size:7px;line-height:9px;color:#dcdcdc;white-space:nowrap;width:22.7px;text-align:center;letter-spacing:-0.4px;">40</div>
<div style="left:174px;top:448.5px;width:22.7px;height:29.2px;background:#3e3e3e;"></div>
<svg style="left:177.35px;top:448.7px;" width="16" height="16" viewBox="0 0 16 16"><circle cx="8" cy="8" r="6.00" fill="#ffffff"/></svg>
<div style="left:174px;top:468.0px;font-size:7px;line-height:9px;color:#dcdcdc;white-space:nowrap;width:22.7px;text-align:center;letter-spacing:-0.4px;">50</div>
<div style="left:80px;top:478.5px;width:22.7px;height:29.2px;background:#3e3e3e;"></div>
<svg style="left:83.35px;top:478.7px;" width="16" height="16" viewBox="0 0 16 16"><circle cx="8" cy="8" r="6.00" fill="#ffffff"/></svg>
<div style="left:80px;top:498.0px;font-size:7px;line-height:9px;color:#dcdcdc;white-space:nowrap;width:22.7px;text-align:center;letter-spacing:-0.4px;">60</div>
<div style="left:103.5px;top:478.5px;width:22.7px;height:29.2px;background:#3e3e3e;"></div>
<svg style="left:106.85px;top:478.7px;" width="16" height="16" viewBox="0 0 16 16"><circle cx="8" cy="8" r="6.00" fill="#ffffff"/></svg>
<div style="left:103.5px;top:498.0px;font-size:7px;line-height:9px;color:#dcdcdc;white-space:nowrap;width:22.7px;text-align:center;letter-spacing:-0.4px;">70</div>
<div style="left:127px;top:478.5px;width:22.7px;height:29.2px;background:#3e3e3e;"></div>
<svg style="left:130.35px;top:478.7px;" width="16" height="16" viewBox="0 0 16 16"><circle cx="8" cy="8" r="6.00" fill="#ffffff"/></svg>
<div style="left:127px;top:498.0px;font-size:7px;line-height:9px;color:#dcdcdc;white-space:nowrap;width:22.7px;text-align:center;letter-spacing:-0.4px;">80</div>
<div style="left:150.5px;top:478.5px;width:22.7px;height:29.2px;background:#3e3e3e;"></div>
<svg style="left:153.85px;top:478.7px;" width="16" height="16" viewBox="0 0 16 16"><circle cx="8" cy="8" r="6.00" fill="#ffffff"/></svg>
<div style="left:150.5px;top:498.0px;font-size:7px;line-height:9px;color:#dcdcdc;white-space:nowrap;width:22.7px;text-align:center;letter-spacing:-0.4px;">100</div>
<div style="left:174px;top:478.5px;width:22.7px;height:29.2px;background:#3e3e3e;"></div>
<svg style="left:177.35px;top:478.7px;" width="16" height="16" viewBox="0 0 16 16"><circle cx="8" cy="8" r="6.00" fill="#ffffff"/></svg>
<div style="left:174px;top:498.0px;font-size:7px;line-height:9px;color:#dcdcdc;white-space:nowrap;width:22.7px;text-align:center;letter-spacing:-0.4px;">120</div>
<div style="left:80px;top:508.5px;width:22.7px;height:30.7px;background:#3e3e3e;"></div>
<svg style="left:83.35px;top:508.7px;" width="16" height="16" viewBox="0 0 16 16"><circle cx="8" cy="8" r="6.00" fill="#ffffff"/></svg>
<div style="left:103.5px;top:508.5px;width:22.7px;height:30.7px;background:#3e3e3e;"></div>
<svg style="left:106.85px;top:508.7px;" width="16" height="16" viewBox="0 0 16 16"><circle cx="8" cy="8" r="6.00" fill="#ffffff"/></svg>
<div style="left:127px;top:508.5px;width:22.7px;height:30.7px;background:#3e3e3e;"></div>
<svg style="left:130.35px;top:508.7px;" width="16" height="16" viewBox="0 0 16 16"><circle cx="8" cy="8" r="6.00" fill="#ffffff"/></svg>
<div style="left:150.5px;top:508.5px;width:22.7px;height:30.7px;background:#3e3e3e;"></div>
<svg style="left:153.85px;top:508.7px;" width="16" height="16" viewBox="0 0 16 16"><circle cx="8" cy="8" r="6.00" fill="#ffffff"/></svg>
<div style="left:174px;top:508.5px;width:22.7px;height:30.7px;background:#3e3e3e;"></div>
<svg style="left:177.35px;top:508.7px;" width="16" height="16" viewBox="0 0 16 16"><circle cx="8" cy="8" r="6.00" fill="#ffffff"/></svg>
<div style="left:204px;top:36px;width:628px;height:24px;background:#353535;"></div>
<div style="left:205px;top:37px;width:627px;height:22.3px;background:#4c4c4c;"></div>
<div style="left:692.5px;top:37px;width:57.2px;height:22.3px;background:#626f8c;"></div>
<div style="left:308.5px;top:38px;width:0.9px;height:21px;background:#5e5e5e;"></div>
<div style="left:415px;top:38px;width:0.9px;height:21px;background:#5e5e5e;"></div>
<div style="left:478px;top:38px;width:0.9px;height:21px;background:#5e5e5e;"></div>
<div style="left:598px;top:38px;width:0.9px;height:21px;background:#5e5e5e;"></div>
<div style="left:690px;top:38px;width:0.9px;height:21px;background:#5e5e5e;"></div>
<div style="left:781px;top:38px;width:0.9px;height:21px;background:#5e5e5e;"></div>
<svg style="left:213px;top:40px;" width="16" height="16" viewBox="0 0 16 16"><path d="M0.8 3.6h10.4M0.8 8h10.4M0.8 12.4h10.4" fill="none" stroke="#e0e0e0" stroke-width="1.2" stroke-linecap="round" stroke-linejoin="round" /></svg>
<svg style="left:240.5px;top:40px;" width="16" height="16" viewBox="0 0 16 16"><rect x="0.8" y="5.2" width="9.6" height="9.2" rx="1" fill="none" stroke="#d4d4d4" stroke-width="1"/><path d="M3.4 11.6L5 8.4 10 3.4 12 5.4 7 10.4z" fill="none" stroke="#d4d4d4" stroke-width="0.9" stroke-linecap="round" stroke-linejoin="round" /><path d="M9.6 2.6L11.4 0.8 14.6 4 12.8 5.8z" fill="#d4d4d4"/></svg>
<svg style="left:264.5px;top:40px;" width="16" height="16" viewBox="0 0 16 16"><path d="M1 5.8L5.2 10L9.4 5.8" fill="none" stroke="#e0e0e0" stroke-width="1.2" stroke-linecap="round" stroke-linejoin="round" /></svg>
<svg style="left:284px;top:40px;" width="16" height="16" viewBox="0 0 16 16"><rect x="0.7" y="1.2" width="13.2" height="13.2" rx="2" fill="none" stroke="#d4d4d4" stroke-width="1"/><path d="M7.6 8.4C6.4 8.4 6.2 6.8 7.6 6.6 9.6 6.4 10 9.4 7.4 9.8 4.6 10.2 3.6 6 7 5 10.6 4 12.6 8 11.2 10.2" fill="none" stroke="#d4d4d4" stroke-width="0.9" stroke-linecap="round" stroke-linejoin="round" /></svg>
<svg style="left:321px;top:40px;" width="16" height="16" viewBox="0 0 16 16"><path d="M0.8 1.6h9.6v7 M6.4 11.8H3.6L0.8 9V1.6" fill="none" stroke="#d4d4d4" stroke-width="1.1" stroke-linecap="round" stroke-linejoin="round" /><circle cx="10.6" cy="11.8" r="2.8" fill="#4c4c4c" stroke="#d4d4d4" stroke-width="0.9"/><path d="M10.6 10.2v3.2M9 11.8h3.2" fill="none" stroke="#d4d4d4" stroke-width="0.8" stroke-linecap="round" stroke-linejoin="round" /></svg>
<svg style="left:348px;top:40px;" width="16" height="16" viewBox="0 0 16 16"><path d="M0.6 13V2.6h4.2l1 1.6h4.6v1.6H3.4L0.6 13z" fill="#d4d4d4"/><path d="M4 6.6h10.4L11.6 13.4H1.2z" fill="#d4d4d4"/><path d="M9.4 1.2h4v1h-4z M12.6 0l2 1.7-2 1.7z" fill="#d4d4d4"/></svg>
<svg style="left:376px;top:40px;" width="16" height="16" viewBox="0 0 16 16"><path d="M2.6 8.4L4.8 3.4h1.4M11.4 8.4L9.2 3.4H7.8" fill="none" stroke="#747474" stroke-width="0.9" stroke-linecap="round" stroke-linejoin="round" /><rect x="0.8" y="8.4" width="12.4" height="5.2" rx="1" fill="#606060" stroke="#747474" stroke-width="0.9"/><path d="M7 0.6v5.6M5.2 4.6L7 6.4 8.8 4.6" fill="none" stroke="#747474" stroke-width="0.9" stroke-linecap="round" stroke-linejoin="round" /></svg>
<svg style="left:399.5px;top:40px;" width="16" height="16" viewBox="0 0 16 16"><path d="M1 5.8L5.2 10L9.4 5.8" fill="none" stroke="#e0e0e0" stroke-width="1.2" stroke-linecap="round" stroke-linejoin="round" /></svg>
<svg style="left:426px;top:40px;" width="16" height="16" viewBox="0 0 16 16"><path d="M3 5.4h5.4C12.6 5.4 12.6 12 8.4 12H5" fill="none" stroke="#747474" stroke-width="1" stroke-linecap="round" stroke-linejoin="round" /><path d="M0.8 5.4L4.4 2.4v6z" fill="#747474"/></svg>
<svg style="left:454px;top:40px;" width="16" height="16" viewBox="0 0 16 16"><path d="M9.6 5.4H4.2C0 5.4 0 12 4.2 12h3.4" fill="none" stroke="#747474" stroke-width="1" stroke-linecap="round" stroke-linejoin="round" /><path d="M11.8 5.4L8.2 2.4v6z" fill="#747474"/></svg>
<svg style="left:488px;top:40px;" width="16" height="16" viewBox="0 0 16 16"><path d="M7 0.8v3" stroke="#e0e0e0" stroke-width="1" transform="rotate(0 7 7.4)"/><path d="M7 0.8v3" stroke="#b8b8b8" stroke-width="1" transform="rotate(30 7 7.4)"/><path d="M7 0.8v3" stroke="#e0e0e0" stroke-width="1" transform="rotate(60 7 7.4)"/><path d="M7 0.8v3" stroke="#b8b8b8" stroke-width="1" transform="rotate(90 7 7.4)"/><path d="M7 0.8v3" stroke="#e0e0e0" stroke-width="1" transform="rotate(120 7 7.4)"/><path d="M7 0.8v3" stroke="#b8b8b8" stroke-width="1" transform="rotate(150 7 7.4)"/><path d="M7 0.8v3" stroke="#e0e0e0" stroke-width="1" transform="rotate(180 7 7.4)"/><path d="M7 0.8v3" stroke="#b8b8b8" stroke-width="1" transform="rotate(210 7 7.4)"/><path d="M7 0.8v3" stroke="#e0e0e0" stroke-width="1" transform="rotate(240 7 7.4)"/><path d="M7 0.8v3" stroke="#b8b8b8" stroke-width="1" transform="rotate(270 7 7.4)"/><path d="M7 0.8v3" stroke="#e0e0e0" stroke-width="1" transform="rotate(300 7 7.4)"/><path d="M7 0.8v3" stroke="#b8b8b8" stroke-width="1" transform="rotate(330 7 7.4)"/></svg>
<svg style="left:516px;top:40px;" width="16" height="16" viewBox="0 0 16 16"><rect x="2.4" y="2.4" width="9.4" height="9.4" fill="#606060" stroke="#747474" stroke-width="1" stroke-dasharray="1.2 1"/><path d="M13.6 4v9.6H4" fill="none" stroke="#747474" stroke-width="0.9" stroke-linecap="round" stroke-linejoin="round" stroke-dasharray="1.2 1.2"/></svg>
<svg style="left:544.5px;top:40px;" width="16" height="16" viewBox="0 0 16 16"><path d="M8 0.8L15.4 7.8 8 14.6 1.4 8.6C0.6 10 0.6 11.4 1.4 12.8-0.6 11-0.4 8.4 1.2 7.2z" fill="#d4d4d4"/><path d="M8 2.2L4 6.2h8.2z" fill="#4c4c4c"/></svg>
<svg style="left:574.5px;top:40px;" width="16" height="16" viewBox="0 0 16 16"><rect x="1.6" y="4" width="10.4" height="10.4" fill="none" stroke="#d4d4d4" stroke-width="1"/><path d="M6.8 0.8V4" fill="none" stroke="#d4d4d4" stroke-width="0.9" stroke-linecap="round" stroke-linejoin="round" /><path d="M6 0h1.6v1.6H6z M0.8 3.2h1.6v1.6H0.8z M11.2 3.2h1.6v1.6h-1.6z M0.8 13.6h1.6v1.6H0.8z M11.2 13.6h1.6v1.6h-1.6z M0.8 8.4h1.6V10H0.8z M11.2 8.4h1.6V10h-1.6z M6 13.6h1.6v1.6H6z" fill="#d4d4d4"/></svg>
<svg style="left:608px;top:40px;" width="16" height="16" viewBox="0 0 16 16"><rect x="1.4" y="2" width="11.2" height="11.6" fill="none" stroke="#747474" stroke-width="1" stroke-dasharray="1.2 1.2"/><path d="M0.6 1L13.4 14.6" fill="none" stroke="#747474" stroke-width="1" stroke-linecap="round" stroke-linejoin="round" /></svg>
<svg style="left:636.5px;top:40px;" width="16" height="16" viewBox="0 0 16 16"><rect x="1.4" y="2" width="11.2" height="11.6" fill="none" stroke="#747474" stroke-width="1" stroke-dasharray="1.2 1.2"/><path d="M13.2 2.6v11.6H2z" fill="#747474"/></svg>
<svg style="left:665.5px;top:40px;" width="16" height="16" viewBox="0 0 16 16"><rect x="1" y="1.6" width="12" height="12" rx="2" fill="none" stroke="#747474" stroke-width="1.4"/><rect x="3" y="3.6" width="8" height="8" fill="none" stroke="#747474" stroke-width="0.8" stroke-dasharray="1 1"/></svg>
<svg style="left:699.5px;top:40px;" width="16" height="16" viewBox="0 0 16 16"><path d="M1.2 4v10h10" fill="none" stroke="#b0b8cc" stroke-width="1.0" stroke-linecap="round" stroke-linejoin="round" /><path d="M1.2 4L11 14" fill="none" stroke="#98a2bc" stroke-width="0.7" stroke-linecap="round" stroke-linejoin="round" /><path d="M6.6 9L14 1.6" fill="none" stroke="#dcdcdc" stroke-width="1.6" stroke-linecap="round" stroke-linejoin="round" /></svg>
<svg style="left:727.5px;top:40px;" width="16" height="16" viewBox="0 0 16 16"><path d="M0.8 8h13.4C14 12 11 14.4 7.4 14.4 4 14.4 1 12 0.8 8z" fill="none" stroke="#b0b8cc" stroke-width="0.9" stroke-linecap="round" stroke-linejoin="round" /><path d="M6.6 9L14 1.6" fill="none" stroke="#dcdcdc" stroke-width="1.6" stroke-linecap="round" stroke-linejoin="round" /></svg>
<svg style="left:757.5px;top:40px;" width="16" height="16" viewBox="0 0 16 16"><path d="M0.8 8h13.6M0.8 14.4h13.6M4 5v10M11.4 6.4v8" fill="none" stroke="#a0a0a0" stroke-width="0.7" stroke-linecap="round" stroke-linejoin="round" /><path d="M4 8V14.4h7.4" fill="none" stroke="#d4d4d4" stroke-width="1.0" stroke-linecap="round" stroke-linejoin="round" /><path d="M6.6 9L14 1.6" fill="none" stroke="#dcdcdc" stroke-width="1.6" stroke-linecap="round" stroke-linejoin="round" /></svg>
<svg style="left:792px;top:40px;" width="16" height="16" viewBox="0 0 16 16"><path d="M7.4 1.6C3.6 1.6 1.2 4.2 1.2 7.2 1.2 9 2 10.6 3.4 11.6L2.2 14.2 6 12.8C10.4 13.4 13.6 10.6 13.6 7.2 13.6 5.6 13 4.4 12 3.4" fill="none" stroke="#d4d4d4" stroke-width="0.9" stroke-linecap="round" stroke-linejoin="round" /><path d="M5.6 5.6C5.6 3.4 9.4 3.4 9.4 5.6 9.4 7 7.5 7 7.5 8.8" fill="none" stroke="#d4d4d4" stroke-width="1" stroke-linecap="round" stroke-linejoin="round" /><circle cx="7.5" cy="10.8" r="0.7" fill="#d4d4d4"/><path d="M10.8 2.8L13.4 0.4M11.6 0.4h1.8v1.8" fill="none" stroke="#d4d4d4" stroke-width="0.7" stroke-linecap="round" stroke-linejoin="round" /></svg>
<div style="left:204px;top:59.3px;width:628px;height:15.7px;background:#353535;"></div>
<div style="left:204.5px;top:61px;width:75px;height:13.2px;background:#626f8c;"></div>
<div style="left:207.8px;top:63.2px;font-size:7px;line-height:9px;color:#e4e4e4;white-space:nowrap;letter-spacing:-0.25px;">Animation</div>
<svg style="left:268.5px;top:64px;" width="7" height="7" viewBox="0 0 7 7"><path d="M0.8 0.8l5.4 5.4M6.2 0.8l-5.4 5.4" stroke="#e4e4e4" stroke-width="0.9" fill="none"/></svg>
<svg style="left:818px;top:64px;" width="9" height="6" viewBox="0 0 9 6"><path d="M0.8 0.8L4.5 4.4L8.2 0.8" fill="none" stroke="#e0e0e0" stroke-width="1.1" stroke-linecap="round" stroke-linejoin="round" /></svg>
<div style="left:204px;top:75px;width:628px;height:335px;background:#2d2d2d;"></div>
<div style="left:203.7px;top:52px;width:1px;height:462px;background:#303030;"></div>
<div style="left:252px;top:79.3px;width:524px;height:325.7px;background:#ffffff;"></div>
<div style="left:287px;top:114px;width:454px;height:256px;border:1px solid #ceceF2;"></div>
<div style="left:287.3px;top:372.3px;font-size:6.4px;line-height:8.4px;color:#303030;white-space:nowrap;letter-spacing:-0.25px;">1 story</div>
<div style="left:824px;top:75px;width:8px;height:335px;background:#454545;"></div>
<div style="left:825px;top:176px;width:6.5px;height:132px;background:#565656;border-radius:3.2px;"></div>
<div style="left:204.5px;top:410.4px;width:627.5px;height:8px;background:#454545;"></div>
<div style="left:466px;top:411.3px;width:212px;height:6.3px;background:#565656;border-radius:3.2px;"></div>
<div style="left:824px;top:410.3px;width:8px;height:7.7px;background:#4a4a4a;"></div>
<div style="left:204.5px;top:418px;width:627.5px;height:3px;background:#353535;"></div>
<div style="left:205px;top:410.4px;width:114px;height:8.3px;background:#3e3e3e;border:0.8px solid #5a5a5a;border-radius:1px;"></div>
<svg style="left:205px;top:410.3px;" width="114" height="8" viewBox="0 0 114 8"><path d="M12 7L30 3.4V7z" fill="#505050"/><path d="M34 3h22v4H34z" fill="#444"/><path d="M88 7C90 2.4 98 1.6 104 3.2L112 7z" fill="#2e2e2e"/><path d="M62 7L78 3.6 84 3.6 84 7z" fill="#4c4c4c"/></svg>
<div style="left:262px;top:410.3px;width:0.8px;height:8px;background:#5a5a5a;"></div>
<div style="left:234.2px;top:411px;width:3.2px;height:7px;background:#6e6e6e;"></div>
<div style="left:288.6px;top:411px;width:3.2px;height:7px;background:#6e6e6e;"></div>
<div style="left:206.5px;top:410.9px;font-size:7.5px;line-height:9.5px;color:#d4d4d4;white-space:nowrap;letter-spacing:-0.5px;line-height:8px;">70.9</div>
<div style="left:265px;top:410.9px;font-size:7.5px;line-height:9.5px;color:#d4d4d4;white-space:nowrap;letter-spacing:-0.5px;line-height:8px;">0.0</div>
<div style="left:832px;top:36px;width:1px;height:478px;background:#2e2e2e;"></div>
<div style="left:833px;top:52px;width:127px;height:462px;background:#3c3c3c;"></div>
<div style="left:835.5px;top:39.5px;width:1.2px;height:8.5px;background:#5a5a5a;"></div>
<div style="left:837.5px;top:39.5px;width:1.2px;height:8.5px;background:#5a5a5a;"></div>
<svg style="left:931px;top:41px;" width="4" height="6" viewBox="0 0 4 6"><path d="M1 0.5L3 3L1 5.5" stroke="#8a8a8a" stroke-width="0.8" fill="none"/></svg>
<svg style="left:952px;top:41px;" width="6" height="6" viewBox="0 0 6 6"><path d="M0.5 0.5L2.5 3L0.5 5.5M3.5 0.5L5.5 3L3.5 5.5" stroke="#8a8a8a" stroke-width="0.8" fill="none"/></svg>
<div style="left:833px;top:51.3px;width:127px;height:0.9px;background:#2f2f2f;"></div>
<div style="left:833px;top:52px;width:127px;height:16px;background:#343434;"></div>
<svg style="left:838.5px;top:57px;" width="6" height="6" viewBox="0 0 6 6"><path d="M0 0.8h5.5M0 3h5.5M0 5.2h5.5" stroke="#8c8c8c" stroke-width="0.7" fill="none"/></svg>
<div style="left:850px;top:56.3px;width:49px;height:12px;background:#4c4c4c;"></div>
<div style="left:900px;top:56.3px;width:48px;height:12px;background:#484848;"></div>
<div style="left:833px;top:67px;width:127px;height:3.3px;background:#4c4c4c;"></div>
<svg style="left:854.5px;top:59px;" width="12" height="10" viewBox="0 0 12 10"><rect x="2.4" y="0.6" width="8.8" height="6.6" rx="1.2" fill="#7c7c7c" stroke="#c8c8c8" stroke-width="0.8"/><path d="M1 2.5v5.2c0 .8.5 1.3 1.3 1.3h7" fill="none" stroke="#c8c8c8" stroke-width="0.8"/></svg>
<div style="left:870.5px;top:59.3px;font-size:6.6px;line-height:8.6px;color:#dcdcdc;white-space:nowrap;letter-spacing:-0.25px;">Navigator</div>
<svg style="left:906px;top:59px;" width="11" height="9" viewBox="0 0 11 9"><rect x="0.6" y="0.6" width="9.4" height="7.2" rx="1" fill="none" stroke="#7a7a7a" stroke-width="0.9"/><rect x="2.4" y="2" width="6" height="4.4" fill="#666"/></svg>
<div style="left:922px;top:59.3px;font-size:6.6px;line-height:8.6px;color:#7c7c7c;white-space:nowrap;letter-spacing:-0.25px;">Sub View</div>
<div style="left:833px;top:70.3px;width:127px;height:120px;background:#2d2d2d;"></div>
<div style="left:833.3px;top:89.8px;width:125.7px;height:81px;background:#e01018;"></div>
<div style="left:833.3px;top:91.6px;width:125.7px;height:78.4px;background:#ffffff;"></div>
<div style="left:833.5px;top:170px;width:125.5px;height:1.6px;background:#8c1016;"></div>
<div style="left:833px;top:190px;width:127px;height:37.5px;background:#4c4c4c;"></div>
<div style="left:846px;top:196.5px;font-size:6.6px;line-height:8.6px;color:#d6d6d6;white-space:nowrap;width:17px;text-align:right;letter-spacing:-0.4px;">70.9</div>
<div style="left:846px;top:214.5px;font-size:6.6px;line-height:8.6px;color:#d6d6d6;white-space:nowrap;width:17px;text-align:right;letter-spacing:-0.4px;">0.0</div>
<svg style="left:865.7px;top:194.3px;" width="12" height="12" viewBox="0 0 12 12"><circle cx="6" cy="6" r="5.3" fill="none" stroke="#c8c8c8" stroke-width="0.9"/><path d="M3.3 6h5.4" fill="none" stroke="#c8c8c8" stroke-width="0.9" stroke-linecap="round" stroke-linejoin="round"/></svg>
<svg style="left:884.7px;top:194.3px;" width="12" height="12" viewBox="0 0 12 12"><circle cx="6" cy="6" r="5.3" fill="none" stroke="#c8c8c8" stroke-width="0.9"/><path d="M3.3 6h5.4M6 3.3v5.4" fill="none" stroke="#c8c8c8" stroke-width="0.9" stroke-linecap="round" stroke-linejoin="round"/></svg>
<svg style="left:903.7px;top:194.3px;" width="12" height="12" viewBox="0 0 12 12"><circle cx="6" cy="6" r="5.3" fill="none" stroke="#c8c8c8" stroke-width="0.9"/><rect x="3.6" y="3.6" width="4.8" height="4.8" rx="0.6" fill="#c8c8c8"/></svg>
<div style="left:920.3px;top:193px;width:0.8px;height:32px;background:#3a3a3a;"></div>
<svg style="left:925px;top:194.5px;" width="12" height="12" viewBox="0 0 12 12"><rect x="0.8" y="0.8" width="5.6" height="5.6" rx="0.8" fill="none" stroke="#c8c8c8" stroke-width="0.9"/><rect x="5.4" y="5.4" width="5.6" height="5.6" rx="0.8" fill="#4c4c4c" stroke="#c8c8c8" stroke-width="0.9"/><path d="M2 2h2.2L2 4.2zM10 10h-2.2L10 7.8zM5.2 4.2h2v2z M6.8 6.6v-2h-2z" fill="#c8c8c8"/></svg>
<svg style="left:945px;top:194.5px;" width="11" height="11" viewBox="0 0 11 11"><rect x="0.8" y="0.8" width="9" height="9" rx="1" fill="none" stroke="#c8c8c8" stroke-width="0.9"/><path d="M3 7.6L7.6 3" fill="none" stroke="#c8c8c8" stroke-width="0.9" stroke-linecap="round" stroke-linejoin="round"/><path d="M2.4 8.2V5.4L5.2 8.2zM8.2 2.4V5.2L5.4 2.4z" fill="#c8c8c8"/></svg>
<svg style="left:866.5px;top:212.5px;" width="11" height="11" viewBox="0 0 11 11"><path d="M2.6 4.2 A4 4 0 1 1 5.6 9.6" fill="none" stroke="#c8c8c8" stroke-width="1" stroke-linecap="round" stroke-linejoin="round"/><path d="M0.4 3.2L4.6 3.2L2.6 6.6z" fill="#c8c8c8"/></svg>
<svg style="left:885px;top:212.5px;" width="11" height="11" viewBox="0 0 11 11"><path d="M8.4 4.2 A4 4 0 1 0 5.4 9.6" fill="none" stroke="#c8c8c8" stroke-width="1" stroke-linecap="round" stroke-linejoin="round"/><path d="M10.6 3.2L6.4 3.2L8.4 6.6z" fill="#c8c8c8"/></svg>
<svg style="left:903.7px;top:212.3px;" width="12" height="12" viewBox="0 0 12 12"><circle cx="6" cy="6" r="5.3" fill="none" stroke="#c8c8c8" stroke-width="0.9"/><circle cx="6" cy="6" r="1.3" fill="#c8c8c8"/><path d="M6 0.7V5" fill="none" stroke="#c8c8c8" stroke-width="0.9" stroke-linecap="round" stroke-linejoin="round"/></svg>
<svg style="left:925px;top:213px;" width="12" height="10" viewBox="0 0 12 10"><path d="M0.6 1.2L4.8 5L0.6 8.8z" fill="none"/><path d="M0.8 1.6L4.6 5L0.8 8.4z" fill="none" stroke="#c8c8c8" stroke-width="0.8" stroke-linecap="round" stroke-linejoin="round"/><path d="M6 0.4V9.6" fill="none" stroke="#c8c8c8" stroke-width="0.9" stroke-linecap="round" stroke-linejoin="round"/><path d="M11.4 1.2L7.2 5L11.4 8.8z" fill="#c8c8c8"/></svg>
<svg style="left:945px;top:211.5px;" width="10" height="13" viewBox="0 0 10 13"><path d="M1 0.6h8L5 5z" fill="#c8c8c8"/><path d="M0.2 6.5h9.6" fill="none" stroke="#c8c8c8" stroke-width="0.9" stroke-linecap="round" stroke-linejoin="round"/><path d="M1.4 12.2h7.2L5 8.2z" fill="none" stroke="#c8c8c8" stroke-width="0.8" stroke-linecap="round" stroke-linejoin="round"/></svg>
<div style="left:833px;top:227.5px;width:127px;height:16px;background:#343434;"></div>
<svg style="left:838.5px;top:233px;" width="6" height="6" viewBox="0 0 6 6"><path d="M0 0.8h5.5M0 3h5.5M0 5.2h5.5" stroke="#8c8c8c" stroke-width="0.7" fill="none"/></svg>
<div style="left:850px;top:232.5px;width:55.5px;height:12px;background:#4c4c4c;"></div>
<div style="left:907px;top:232.5px;width:20.5px;height:12px;background:#484848;"></div>
<div style="left:929px;top:232.5px;width:21.5px;height:12px;background:#484848;"></div>
<div style="left:833px;top:243px;width:127px;height:118px;background:#4c4c4c;"></div>
<svg style="left:854.5px;top:234.5px;" width="11" height="11" viewBox="0 0 11 11"><circle cx="5.5" cy="5.5" r="4.8" fill="none" stroke="#c8c8c8" stroke-width="0.9"/><rect x="3.4" y="3.4" width="4.2" height="4.2" rx="0.5" fill="#c8c8c8"/></svg>
<div style="left:870.5px;top:236px;font-size:6.6px;line-height:8.6px;color:#dcdcdc;white-space:nowrap;letter-spacing:-0.25px;">Color Wheel</div>
<svg style="left:912px;top:235.5px;" width="11" height="8" viewBox="0 0 11 8"><rect x="0.5" y="0.5" width="10" height="7" rx="1" fill="#5c5c5c" stroke="#727272" stroke-width="0.7"/><path d="M0.5 4h10M3.8 0.5v7M7.2 0.5v7" stroke="#727272" stroke-width="0.6"/></svg>
<svg style="left:934.5px;top:235.5px;" width="11" height="8" viewBox="0 0 11 8"><rect x="0.5" y="0.5" width="10" height="7" rx="1" fill="#5c5c5c" stroke="#727272" stroke-width="0.7"/><rect x="1.6" y="1.6" width="4" height="2.6" fill="#727272"/><path d="M0.5 5.4h10" stroke="#727272" stroke-width="0.6"/></svg>
<div style="left:845.3px;top:247.7px;width:102px;height:102px;border-radius:50%;background:conic-gradient(from 297deg,#f00,#ff0,#0f0,#0ff,#00f,#f0f,#f00);-webkit-mask:radial-gradient(circle,transparent 40.9px,#000 41.7px,#000 49.5px,transparent 50.3px);mask:radial-gradient(circle,transparent 40.9px,#000 41.7px,#000 49.5px,transparent 50.3px);"></div>
<div style="left:870.8px;top:273px;width:51.8px;height:52px;background:linear-gradient(to bottom,rgba(0,0,0,0),#000),linear-gradient(to right,#fff,#f0001e);"></div>
<div style="left:917px;top:309px;width:5.4px;height:5.4px;border:0.9px solid #e8e8e8;border-radius:50%;left:914.8px;top:297.6px;"></div>
<div style="left:851.2px;top:276.8px;width:6.6px;height:6.2px;background:#ee1020;border:1px solid #fff;outline:0.6px solid #222;transform:rotate(24deg);"></div>
<div style="left:842px;top:337px;width:12.5px;height:12px;background:#4c4c4c;border:0.8px solid #6a6a6a;border-radius:1.5px;"></div>
<div style="left:843.2px;top:338.2px;width:10.2px;height:9.6px;background:#ffffff;border-radius:1px;"></div>
<div style="left:834px;top:330px;width:13.6px;height:13px;background:#7a0c14;border:1.2px solid #8096cc;border-radius:2px;"></div>
<div style="left:834.5px;top:351px;width:19.5px;height:7.4px;background:#4c4c4c;border:0.8px solid #707070;border-radius:3.5px;"></div>
<div style="left:836.2px;top:352.6px;width:16.2px;height:4.2px;background:#fff;border-radius:2px;background-image:conic-gradient(#b0b0b0 25%,#fff 0 50%,#b0b0b0 0 75%,#fff 0);background-size:2.7px 2.7px;"></div>
<div style="left:862.5px;top:351.8px;width:5.2px;height:5.2px;background:#c8101c;border-radius:0.8px;"></div>
<div style="left:866.8px;top:350.8px;font-size:6.8px;line-height:8.8px;color:#d6d6d6;white-space:nowrap;width:14px;text-align:right;letter-spacing:-0.4px;">121</div>
<div style="left:886.5px;top:351.8px;width:5.2px;height:5.2px;background:#18c020;border-radius:0.8px;"></div>
<div style="left:890px;top:350.8px;font-size:6.8px;line-height:8.8px;color:#d6d6d6;white-space:nowrap;width:14px;text-align:right;letter-spacing:-0.4px;">11</div>
<div style="left:910.5px;top:351.8px;width:5.2px;height:5.2px;background:#1018e8;border-radius:0.8px;"></div>
<div style="left:914px;top:350.8px;font-size:6.8px;line-height:8.8px;color:#d6d6d6;white-space:nowrap;width:14px;text-align:right;letter-spacing:-0.4px;">21</div>
<svg style="left:941px;top:343px;" width="12" height="12" viewBox="0 0 12 12"><circle cx="6" cy="6" r="5.2" fill="none" stroke="#c8c8c8" stroke-width="0.9"/><path d="M4 2.6v6.8L9.6 6z" fill="none" stroke="#c8c8c8" stroke-width="0.8" stroke-linecap="round" stroke-linejoin="round"/></svg>
<div style="left:833px;top:361px;width:127px;height:16px;background:#343434;"></div>
<svg style="left:838.5px;top:367px;" width="6" height="6" viewBox="0 0 6 6"><path d="M0 0.8h5.5M0 3h5.5M0 5.2h5.5" stroke="#8c8c8c" stroke-width="0.7" fill="none"/></svg>
<div style="left:850px;top:365.5px;width:37px;height:12px;background:#4c4c4c;"></div>
<div style="left:888px;top:365.5px;width:62px;height:12px;background:#484848;"></div>
<div style="left:833px;top:376px;width:127px;height:138px;background:#4c4c4c;"></div>
<svg style="left:855px;top:367px;" width="11" height="13" viewBox="0 0 11 13"><path d="M5.5 0.8L10.2 3.2L5.5 5.6L0.8 3.2z" fill="none" stroke="#c8c8c8" stroke-width="0.9" stroke-linecap="round" stroke-linejoin="round"/><path d="M0.8 5.6L5.5 8L10.2 5.6M0.8 8L5.5 10.4L10.2 8M0.8 10.2L5.5 12.6L10.2 10.2" fill="none" stroke="#c8c8c8" stroke-width="0.9" stroke-linecap="round" stroke-linejoin="round"/></svg>
<div style="left:871px;top:369.4px;font-size:6.6px;line-height:8.6px;color:#dcdcdc;white-space:nowrap;letter-spacing:-0.25px;">Layer</div>
<svg style="left:893.5px;top:368px;" width="12" height="10" viewBox="0 0 12 10"><path d="M6 0.8L11 3.4L6 6L1 3.4z M1 3.4V8 M11 3.4V8" fill="none" stroke="#7a7a7a" stroke-width="0.8" stroke-linecap="round" stroke-linejoin="round"/><path d="M1 9h10" stroke="#7a7a7a" stroke-width="0.8" stroke-dasharray="1.4 1"/></svg>
<div style="left:909.5px;top:369.4px;font-size:6.6px;line-height:8.6px;color:#7c7c7c;white-space:nowrap;letter-spacing:-0.25px;">Layer Property</div>
<div style="left:834px;top:381.3px;width:29px;height:17.5px;background:#595959;border:0.8px solid #6c6c6c;"></div>
<div style="left:837.5px;top:384.5px;width:12px;height:11.5px;background:#5a5a5a;border:0.8px solid #8a8a8a;border-radius:1.2px;"></div>
<svg style="left:852.5px;top:387px;" width="8" height="6" viewBox="0 0 8 6"><path d="M0.8 1L4 4.4L7.2 1" fill="none" stroke="#d8d8d8" stroke-width="1" stroke-linecap="round" stroke-linejoin="round"/></svg>
<div style="left:865.5px;top:381.3px;width:30.5px;height:17.5px;background:#595959;border:0.8px solid #6c6c6c;"></div>
<div style="left:868px;top:385.5px;font-size:6.4px;line-height:8.4px;color:#a8a8a8;white-space:nowrap;width:13px;overflow:hidden;letter-spacing:-0.3px;-webkit-mask:linear-gradient(90deg,#000 60%,transparent);">Norm</div>
<svg style="left:885px;top:387px;" width="8" height="6" viewBox="0 0 8 6"><path d="M0.8 1L4 4.4L7.2 1" fill="none" stroke="#d8d8d8" stroke-width="1" stroke-linecap="round" stroke-linejoin="round"/></svg>
<div style="left:900.5px;top:385.2px;width:32px;height:7px;background:#fff;background-image:conic-gradient(#a8a8a8 25%,#fff 0 50%,#a8a8a8 0 75%,#fff 0);background-size:4.6px 4.6px;"></div>
<div style="left:932.3px;top:381.5px;width:2.2px;height:14.5px;background:#8c8c8c;border-radius:1px;"></div>
<div style="left:933.5px;top:384.5px;font-size:6.6px;line-height:8.6px;color:#d6d6d6;white-space:nowrap;width:14.5px;text-align:right;letter-spacing:-0.4px;">100</div>
<svg style="left:950.2px;top:384px;" width="6" height="10" viewBox="0 0 6 10"><path d="M0.7 3.6L3 1L5.3 3.6M0.7 6.4L3 9L5.3 6.4" fill="none" stroke="#d0d0d0" stroke-width="0.9" stroke-linecap="round" stroke-linejoin="round"/></svg>
<svg style="left:854.5px;top:403px;" width="12" height="12" viewBox="0 0 12 12"><rect x="2.6" y="0.8" width="8" height="8" rx="1" fill="none" stroke="#b0b0b0" stroke-width="0.8" stroke-dasharray="1.4 1"/><rect x="0.8" y="2.8" width="7.6" height="7.6" rx="1" fill="#8a8a8a" stroke="#c8c8c8" stroke-width="0.8"/></svg>
<svg style="left:875.5px;top:403px;" width="11" height="12" viewBox="0 0 11 12"><path d="M4.4 0.8h2.2v1.4H4.4z M3.6 3h3.8l1 8.4H2.6z" fill="#c8c8c8"/><path d="M0.8 3.8L3.4 4.6M10.2 3.8L7.6 4.6M1 1.4L3.4 3.2M10 1.4L7.6 3.2" fill="none" stroke="#c8c8c8" stroke-width="0.8" stroke-linecap="round" stroke-linejoin="round"/><path d="M3.2 6.4h4.6" stroke="#4c4c4c" stroke-width="0.9"/></svg>
<svg style="left:897.5px;top:403px;" width="9" height="12" viewBox="0 0 9 12"><rect x="0.6" y="5" width="7.8" height="6" rx="0.8" fill="#c8c8c8"/><path d="M2 5V3.2C2 0.4 7 0.4 7 3.2V5" fill="none" stroke="#c8c8c8" stroke-width="1.1" stroke-linecap="round" stroke-linejoin="round"/></svg>
<svg style="left:917.5px;top:403px;" width="12" height="12" viewBox="0 0 12 12"><path d="M4.5 0.8h2.4v2.4H4.5z M9.3 0.8h2.2v2.4H9.3z M6.9 3.2h2.4v2.4H6.9z M4.5 5.6h2.4v2.4H4.5z M9.3 5.6h2.2v2.4H9.3z M6.9 8h2.4v2.6H6.9z" fill="#c8c8c8"/><rect x="0.4" y="7.2" width="5.2" height="4.2" rx="0.6" fill="#c8c8c8"/><path d="M1.4 7.2V6C1.4 4.2 4.6 4.2 4.6 6V7.2" fill="none" stroke="#c8c8c8" stroke-width="0.9" stroke-linecap="round" stroke-linejoin="round"/></svg>
<div style="left:933.5px;top:400px;width:23.5px;height:18px;background:#525252;"></div>
<svg style="left:937px;top:403.5px;" width="20" height="12" viewBox="0 0 20 12"><rect x="0.8" y="0.8" width="9" height="9" rx="1.4" fill="#6a6a6a" stroke="#7c7c7c" stroke-width="0.8"/><circle cx="5.3" cy="5.3" r="2.6" fill="#4c4c4c"/><path d="M7 7.2L11.4 11.6M11.4 7.2L7 11.6" fill="none" stroke="#8a8a8a" stroke-width="0.8" stroke-linecap="round" stroke-linejoin="round"/><path d="M11 3.6L14 6.6L18.4 2.2" fill="none" stroke="#b8b8b8" stroke-width="0.9" stroke-linecap="round" stroke-linejoin="round"/></svg>
<svg style="left:837.5px;top:422.8px;" width="14" height="13" viewBox="0 0 14 13"><path d="M0.8 0.8h9.4v7.6 M7.8 10.6H3.2C1.4 10.6 0.8 9.6 0.8 8V0.8" fill="none" stroke="#c8c8c8" stroke-width="1.0" stroke-linecap="round" stroke-linejoin="round"/><circle cx="10.4" cy="10" r="2.5" fill="#4c4c4c" stroke="#c8c8c8" stroke-width="0.8"/><path d="M10.4 8.6v2.8M9 10h2.8" fill="none" stroke="#c8c8c8" stroke-width="0.7" stroke-linecap="round" stroke-linejoin="round"/></svg>
<svg style="left:857.5px;top:422.8px;" width="14" height="13" viewBox="0 0 14 13"><path d="M0.6 1h4l1 1.6h4.8v7.6H0.6z" fill="#c8c8c8"/><circle cx="10.8" cy="10" r="2.5" fill="#4c4c4c" stroke="#c8c8c8" stroke-width="0.8"/><path d="M10.8 8.6v2.8M9.4 10h2.8" fill="none" stroke="#c8c8c8" stroke-width="0.7" stroke-linecap="round" stroke-linejoin="round"/></svg>
<svg style="left:879.5px;top:422.3px;" width="13" height="13" viewBox="0 0 13 13"><rect x="4.6" y="0.8" width="7.4" height="7.4" rx="1" fill="none" stroke="#787878" stroke-width="0.8"/><rect x="0.8" y="4.6" width="7.4" height="7.4" rx="1" fill="#4c4c4c" stroke="#787878" stroke-width="0.8"/><circle cx="8.4" cy="4.4" r="1.2" fill="none" stroke="#787878" stroke-width="0.6"/></svg>
<svg style="left:900.5px;top:422.3px;" width="13" height="13" viewBox="0 0 13 13"><rect x="4.6" y="0.8" width="7.4" height="7.4" rx="1" fill="none" stroke="#787878" stroke-width="0.8"/><rect x="0.8" y="4.6" width="7.4" height="7.4" rx="1" fill="#4c4c4c" stroke="#787878" stroke-width="0.8"/></svg>
<svg style="left:922.5px;top:422.8px;" width="11" height="12" viewBox="0 0 11 12"><rect x="0.4" y="0.4" width="10.2" height="10.6" rx="1.2" fill="#c8c8c8"/><circle cx="5.5" cy="5.7" r="2.7" fill="#4c4c4c"/></svg>
<svg style="left:943.5px;top:422.3px;" width="9" height="12" viewBox="0 0 9 12"><path d="M0.4 2.4h8.2M3 2.2V0.8h3v1.4M1.4 2.6L1.8 11.2h5.4L7.6 2.6M3.3 4v5.8M4.5 4v5.8M5.7 4v5.8" fill="none" stroke="#c8c8c8" stroke-width="0.8"/></svg>
<div style="left:833px;top:439px;width:120px;height:62px;background:#2c2c2c;"></div>
<div style="left:833.3px;top:439.3px;width:18px;height:20.0px;background:#3c3c3c;"></div>
<div style="left:853px;top:439.3px;width:16px;height:20.0px;background:#3c3c3c;"></div>
<div style="left:870px;top:439.3px;width:83px;height:20.0px;background:#3c3c3c;"></div>
<svg style="left:837px;top:445.3px;" width="10" height="7" viewBox="0 0 10 7"><path d="M0.5 3.6C2.5 0.2 7.5 0.2 9.5 3.6" fill="none" stroke="#e0e0e0" stroke-width="1.1" stroke-linecap="round" stroke-linejoin="round"/><ellipse cx="5" cy="3.9" rx="3.9" ry="2.6" fill="#e0e0e0"/><circle cx="5" cy="3.7" r="1.5" fill="#3c3c3c"/><circle cx="5" cy="3.7" r="0.8" fill="#e0e0e0"/></svg>
<div style="left:833.3px;top:459.9px;width:18px;height:20.100000000000023px;background:#3c3c3c;"></div>
<div style="left:853px;top:459.9px;width:16px;height:20.100000000000023px;background:#3c3c3c;"></div>
<div style="left:870px;top:459.9px;width:83px;height:20.100000000000023px;background:#5e6b88;"></div>
<svg style="left:837px;top:465.95px;" width="10" height="7" viewBox="0 0 10 7"><path d="M0.5 3.6C2.5 0.2 7.5 0.2 9.5 3.6" fill="none" stroke="#e0e0e0" stroke-width="1.1" stroke-linecap="round" stroke-linejoin="round"/><ellipse cx="5" cy="3.9" rx="3.9" ry="2.6" fill="#e0e0e0"/><circle cx="5" cy="3.7" r="1.5" fill="#3c3c3c"/><circle cx="5" cy="3.7" r="0.8" fill="#e0e0e0"/></svg>
<div style="left:833.3px;top:480.8px;width:18px;height:19.80000000000001px;background:#3c3c3c;"></div>
<div style="left:853px;top:480.8px;width:16px;height:19.80000000000001px;background:#3c3c3c;"></div>
<div style="left:870px;top:480.8px;width:83px;height:19.80000000000001px;background:#3c3c3c;"></div>
<svg style="left:837px;top:486.70000000000005px;" width="10" height="7" viewBox="0 0 10 7"><path d="M0.5 3.6C2.5 0.2 7.5 0.2 9.5 3.6" fill="none" stroke="#e0e0e0" stroke-width="1.1" stroke-linecap="round" stroke-linejoin="round"/><ellipse cx="5" cy="3.9" rx="3.9" ry="2.6" fill="#e0e0e0"/><circle cx="5" cy="3.7" r="1.5" fill="#3c3c3c"/><circle cx="5" cy="3.7" r="0.8" fill="#e0e0e0"/></svg>
<div style="left:857px;top:446px;width:7px;height:7px;background:#3c3c3c;border:0.9px solid #5e5e5e;border-radius:1.2px;"></div>
<div style="left:857px;top:486.5px;width:7px;height:7px;background:#3c3c3c;border:0.9px solid #5e5e5e;border-radius:1.2px;"></div>
<svg style="left:855px;top:464px;" width="11" height="11" viewBox="0 0 11 11"><path d="M2.2 8.2L8.6 1.6" fill="none" stroke="#d8d8d8" stroke-width="1.6" stroke-linecap="round" stroke-linejoin="round"/><path d="M0.6 10.2h9.2" fill="none" stroke="#d8d8d8" stroke-width="0.9" stroke-linecap="round" stroke-linejoin="round"/></svg>
<svg style="left:874.5px;top:446.5px;" width="8" height="6" viewBox="0 0 8 6"><path d="M0.8 1L4 4.4L7.2 1" fill="none" stroke="#d8d8d8" stroke-width="1" stroke-linecap="round" stroke-linejoin="round"/></svg>
<svg style="left:890.5px;top:443.5px;" width="14" height="12" viewBox="0 0 14 12"><rect x="3" y="0.6" width="10" height="7.6" rx="1.2" fill="#9a9a9a" stroke="#c8c8c8" stroke-width="0.8"/><path d="M1.6 2.6v6.2c0 .8.5 1.2 1.2 1.2h8M0.4 4.6v6c0 .8.5 1.2 1.2 1.2h8" fill="none" stroke="#c8c8c8" stroke-width="0.8"/><path d="M4.6 2.2h1M6.6 2.2h1M8.6 2.2h1" stroke="#3c3c3c" stroke-width="0.8"/></svg>
<div style="left:911px;top:441.5px;font-size:6.5px;line-height:8.5px;color:#e0e0e0;white-space:nowrap;letter-spacing:-0.25px;">100 % Normal</div>
<div style="left:911px;top:449.8px;font-size:5.6px;line-height:7.6px;color:#e0e0e0;white-space:nowrap;letter-spacing:-0.35px;">Animation folder</div>
<div style="left:881px;top:459.2px;width:72px;height:1px;background:#2a2a2a;"></div>
<div style="left:885px;top:462.2px;width:21px;height:15.8px;background:#2a2a2a;border:1px solid #e8e8e8;border-radius:1px;"></div>
<div style="left:887.8px;top:464.8px;width:15.4px;height:10.6px;background:#fff;background-image:conic-gradient(#c4c4c4 25%,#fff 0 50%,#c4c4c4 0 75%,#fff 0);background-size:3.4px 3.4px;"></div>
<div style="left:911px;top:462px;font-size:6.5px;line-height:8.5px;color:#eeeeee;white-space:nowrap;letter-spacing:-0.25px;">100 % Normal</div>
<div style="left:911px;top:470.5px;font-size:6.5px;line-height:8.5px;color:#eeeeee;white-space:nowrap;">1</div>
<div style="left:875px;top:484.2px;width:17px;height:12.6px;background:#ffffff;border:0.8px solid #2a2a2a;"></div>
<div style="left:902px;top:483px;width:12.6px;height:13.2px;background:#f0f0f0;"></div>
<svg style="left:903.5px;top:484.8px;" width="9.5" height="9.8" viewBox="0 0 9.5 9.8"><path d="M2.4 0.6h6.4v8.2H2.4z" fill="#f0f0f0" stroke="#2a2a2a" stroke-width="0.8"/><path d="M0.6 2.4v5c0 1 .6 1.8 1.8 1.8h4.2" fill="none" stroke="#2a2a2a" stroke-width="0.8"/></svg>
<div style="left:917px;top:489.5px;font-size:7px;line-height:9px;color:#e0e0e0;white-space:nowrap;letter-spacing:-0.25px;">Paper</div>
<div style="left:204.5px;top:421px;width:627.5px;height:93px;background:#353535;"></div>
<svg style="left:226px;top:424.7px;" width="6" height="6" viewBox="0 0 6 6"><path d="M0 0.8h5.5M0 3h5.5M0 5.2h5.5" stroke="#8c8c8c" stroke-width="0.7" fill="none"/></svg>
<div style="left:237px;top:424px;width:46px;height:12px;background:#4c4c4c;"></div>
<div style="left:220px;top:435px;width:612px;height:79px;background:#4c4c4c;"></div>
<svg style="left:241.5px;top:426px;" width="12" height="11" viewBox="0 0 12 11"><rect x="0.6" y="0.6" width="10.4" height="9.6" rx="1.2" fill="none" stroke="#d0d0d0" stroke-width="0.9"/><path d="M3 0.6v9.6M8.6 0.6v9.6" stroke="#d0d0d0" stroke-width="0.8"/><rect x="5" y="2.6" width="1.6" height="1.6" fill="#d0d0d0"/><rect x="5" y="6.4" width="1.6" height="1.6" fill="#d0d0d0"/></svg>
<div style="left:258px;top:426.8px;font-size:6.6px;line-height:8.6px;color:#dcdcdc;white-space:nowrap;letter-spacing:-0.25px;">Timeline</div>
<svg style="left:225px;top:442.2px;" width="11" height="10" viewBox="0 0 11 10"><rect x="0.5" y="0.5" width="10" height="9" rx="1" fill="#565656" stroke="#6a6a6a" stroke-width="0.8"/><path d="M1.6 6C3 2 4.6 2 5.6 5 6.6 8 8 8 9.4 4" fill="none" stroke="#6e6e6e" stroke-width="0.8"/></svg>
<svg style="left:253px;top:442.2px;" width="12" height="11" viewBox="0 0 12 11"><rect x="0.6" y="0.6" width="10.4" height="9.6" rx="1.2" fill="none" stroke="#d0d0d0" stroke-width="0.9"/><path d="M3 0.6v9.6M8.6 0.6v9.6" stroke="#d0d0d0" stroke-width="0.8"/><rect x="5" y="2.6" width="1.6" height="1.6" fill="#d0d0d0"/><rect x="5" y="6.4" width="1.6" height="1.6" fill="#d0d0d0"/></svg>
<svg style="left:273.5px;top:442.2px;" width="14" height="12" viewBox="0 0 14 12"><rect x="0.6" y="0.6" width="10.4" height="9.6" rx="1.2" fill="none" stroke="#d0d0d0" stroke-width="0.9"/><path d="M3 0.6v9.6M8.6 0.6v9.6" stroke="#d0d0d0" stroke-width="0.8"/><rect x="5" y="2.6" width="1.6" height="1.6" fill="#d0d0d0"/><rect x="5" y="6.4" width="1.6" height="1.6" fill="#d0d0d0"/><circle cx="10.8" cy="9.2" r="2.4" fill="#4c4c4c" stroke="#d0d0d0" stroke-width="0.8"/><path d="M10.8 7.8v2.8M9.4 9.2h2.8" fill="none" stroke="#d0d0d0" stroke-width="0.7" stroke-linecap="round" stroke-linejoin="round" /></svg>
<svg style="left:303px;top:442.2px;" width="12" height="12" viewBox="0 0 12 12"><circle cx="4.6" cy="4.6" r="3.8" fill="none" stroke="#d0d0d0" stroke-width="0.9"/><path d="M7.4 7.4L10.8 10.8" fill="none" stroke="#d0d0d0" stroke-width="1.5" stroke-linecap="round" stroke-linejoin="round" /><path d="M2.8 4.6h3.6" fill="none" stroke="#d0d0d0" stroke-width="0.8" stroke-linecap="round" stroke-linejoin="round" /></svg>
<svg style="left:324px;top:442.2px;" width="12" height="12" viewBox="0 0 12 12"><circle cx="4.6" cy="4.6" r="3.8" fill="none" stroke="#d0d0d0" stroke-width="0.9"/><path d="M7.4 7.4L10.8 10.8" fill="none" stroke="#d0d0d0" stroke-width="1.5" stroke-linecap="round" stroke-linejoin="round" /><path d="M2.8 4.6h3.6M4.6 2.8v3.6" fill="none" stroke="#d0d0d0" stroke-width="0.8" stroke-linecap="round" stroke-linejoin="round" /></svg>
<svg style="left:353px;top:443.2px;" width="10" height="9" viewBox="0 0 10 9"><path d="M9.6 0.4v8L3 4.4z" fill="#727272"/><path d="M1.4 0.6v7.6" fill="none" stroke="#727272" stroke-width="1.2" stroke-linecap="round" stroke-linejoin="round" /></svg>
<svg style="left:374px;top:443.2px;" width="10" height="9" viewBox="0 0 10 9"><path d="M6.6 0.4v8L0.4 4.4z" fill="#727272"/><path d="M8.6 0.8v7.2" fill="none" stroke="#727272" stroke-width="0.8" stroke-linecap="round" stroke-linejoin="round" /></svg>
<svg style="left:395.5px;top:442.2px;" width="9" height="10" viewBox="0 0 9 10"><path d="M0.6 0.6v8.8L8.2 5z" fill="#e0e0e0"/></svg>
<svg style="left:416.5px;top:443.2px;" width="10" height="9" viewBox="0 0 10 9"><path d="M3.4 0.4v8L9.6 4.4z" fill="#d0d0d0"/><path d="M1.4 0.8v7.2" fill="none" stroke="#d0d0d0" stroke-width="0.8" stroke-linecap="round" stroke-linejoin="round" /></svg>
<svg style="left:437.5px;top:443.2px;" width="10" height="9" viewBox="0 0 10 9"><path d="M0.4 0.4v8L6.8 4.4z" fill="#d0d0d0"/><path d="M8.4 0.6v7.6" fill="none" stroke="#d0d0d0" stroke-width="1.2" stroke-linecap="round" stroke-linejoin="round" /></svg>
<div style="left:460px;top:439px;width:21px;height:18px;background:#626f8c;"></div>
<svg style="left:464.5px;top:442.7px;" width="12" height="11" viewBox="0 0 12 11"><path d="M1 5.2V4.6C1 3 2 2 3.6 2h6" fill="none" stroke="#c6cee0" stroke-width="1" stroke-linecap="round" stroke-linejoin="round" /><path d="M11 5.8v.6C11 8 10 9 8.4 9h-6" fill="none" stroke="#c6cee0" stroke-width="1" stroke-linecap="round" stroke-linejoin="round" /><path d="M8.6 0l2.6 2-2.6 2z" fill="#c6cee0"/><path d="M3.4 7l-2.6 2 2.6 2z" fill="#c6cee0"/></svg>
<svg style="left:492px;top:441.7px;" width="14" height="13" viewBox="0 0 14 13"><rect x="1.6" y="0.6" width="10" height="8" rx="1.2" fill="#808080" stroke="#d0d0d0" stroke-width="0.8"/><path d="M0.5 2.6v6.6c0 .8.4 1.2 1.2 1.2h7" fill="none" stroke="#d0d0d0" stroke-width="0.8"/><path d="M3.4 2.2h1M5.4 2.2h1M7.4 2.2h1" stroke="#4c4c4c" stroke-width="0.8"/><circle cx="11" cy="9.6" r="2.4" fill="#4c4c4c" stroke="#d0d0d0" stroke-width="0.8"/><path d="M11 8.2v2.8M9.6 9.6h2.8" fill="none" stroke="#d0d0d0" stroke-width="0.7" stroke-linecap="round" stroke-linejoin="round" /></svg>
<svg style="left:514.5px;top:442.7px;" width="14" height="13" viewBox="0 0 14 13"><rect x="0.6" y="0.6" width="10.4" height="9" rx="1.6" fill="none" stroke="#d0d0d0" stroke-width="0.9"/><path d="M2.6 2.2h1M4.6 2.2h1M6.6 2.2h1M8.6 2.2h.6" stroke="#d0d0d0" stroke-width="0.8"/><circle cx="11" cy="9.6" r="2.4" fill="#4c4c4c" stroke="#d0d0d0" stroke-width="0.8"/><path d="M11 8.2v2.8M9.6 9.6h2.8" fill="none" stroke="#d0d0d0" stroke-width="0.7" stroke-linecap="round" stroke-linejoin="round" /></svg>
<svg style="left:535.5px;top:442.7px;" width="12" height="12" viewBox="0 0 12 12"><rect x="0.6" y="0.6" width="10.4" height="9" rx="1.6" fill="none" stroke="#d0d0d0" stroke-width="0.9"/><path d="M2.6 2.2h1M4.6 2.2h1M6.6 2.2h1M8.6 2.2h.6" stroke="#d0d0d0" stroke-width="0.8"/><rect x="3" y="8" width="5.6" height="2.6" rx="1.3" fill="#4c4c4c" stroke="#d0d0d0" stroke-width="0.8"/></svg>
<svg style="left:556.5px;top:442.7px;" width="13" height="12" viewBox="0 0 13 12"><rect x="0.6" y="0.6" width="10.4" height="9" rx="1.6" fill="none" stroke="#d0d0d0" stroke-width="0.9"/><path d="M2.6 2.2h1M4.6 2.2h1M6.6 2.2h1M8.6 2.2h.6" stroke="#d0d0d0" stroke-width="0.8"/><circle cx="6" cy="9.4" r="1.5" fill="#4c4c4c" stroke="#d0d0d0" stroke-width="0.8"/><circle cx="9.4" cy="9.4" r="1.5" fill="#4c4c4c" stroke="#d0d0d0" stroke-width="0.8"/></svg>
<svg style="left:585px;top:442.2px;" width="12" height="12" viewBox="0 0 12 12"><rect x="2.6" y="2.6" width="8.4" height="8.4" rx="1" fill="none" stroke="#b0b0b0" stroke-width="0.8" stroke-dasharray="1.2 1"/><rect x="0.6" y="0.6" width="8" height="8" rx="1" fill="#8a8a8a" stroke="#d0d0d0" stroke-width="0.8"/></svg>
<svg style="left:612.5px;top:442.2px;" width="13" height="12" viewBox="0 0 13 12"><path d="M2.4 2.6L6 0.8 11 6.6 7.2 8.6z" fill="none" stroke="#727272" stroke-width="0.9" stroke-linecap="round" stroke-linejoin="round" /><path d="M1 1l3 3M8.6 7.6L11.6 11M9.4 11h2.2V8.8" fill="none" stroke="#727272" stroke-width="0.8" stroke-linecap="round" stroke-linejoin="round" /></svg>
<div style="left:629.5px;top:439px;width:11.5px;height:18px;background:#525252;"></div>
<svg style="left:631.5px;top:444.7px;" width="8" height="6" viewBox="0 0 8 6"><path d="M0.8 1L4 4.4L7.2 1" fill="none" stroke="#e0e0e0" stroke-width="1.1" stroke-linecap="round" stroke-linejoin="round" /></svg>
<svg style="left:645.5px;top:442.2px;" width="13" height="12" viewBox="0 0 13 12"><path d="M1 5L6 1 11.4 6 6.4 10z" fill="none" stroke="#727272" stroke-width="0.9" stroke-linecap="round" stroke-linejoin="round" /><rect x="6.6" y="6" width="5" height="5" rx="1.4" fill="#5c5c5c" stroke="#727272" stroke-width="0.8"/></svg>
<svg style="left:666px;top:442.7px;" width="12" height="11" viewBox="0 0 12 11"><path d="M2.6 1H11L9.4 8.6H1z" fill="none" stroke="#d0d0d0" stroke-width="1.1" stroke-linecap="round" stroke-linejoin="round" /><path d="M0.8 4.6L1.6 9.4h7" fill="none" stroke="#d0d0d0" stroke-width="0.8" stroke-linecap="round" stroke-linejoin="round" /><path d="M8 2.6h1.6" fill="none" stroke="#d0d0d0" stroke-width="0.7" stroke-linecap="round" stroke-linejoin="round" /></svg>
<svg style="left:688.5px;top:443.7px;" width="11" height="10" viewBox="0 0 11 10"><path d="M2.4 6.8L8.6 0.8" fill="none" stroke="#727272" stroke-width="1.1" stroke-linecap="round" stroke-linejoin="round" /><path d="M0.6 9h9" fill="none" stroke="#727272" stroke-width="0.8" stroke-linecap="round" stroke-linejoin="round" /></svg>
<div style="left:220.5px;top:457.5px;width:62.5px;height:16px;background:#626262;border-radius:1.5px;border:0.6px solid #6c6c6c;"></div>
<div style="left:230.5px;top:461px;font-size:7px;line-height:9px;color:#d8d8d8;white-space:nowrap;letter-spacing:-0.3px;">C-001-0100</div>
<svg style="left:273.5px;top:463px;" width="8" height="6" viewBox="0 0 8 6"><path d="M0.8 1L4 4.4L7.2 1" fill="none" stroke="#d8d8d8" stroke-width="1" stroke-linecap="round" stroke-linejoin="round" /></svg>
<div style="left:283px;top:457.5px;width:4.5px;height:56.5px;background:#4a4a4a;"></div>
<div style="left:287.5px;top:457.5px;width:100.5px;height:15.8px;background:#50535a;"></div>
<div style="left:287.5px;top:473.3px;width:100.5px;height:34.2px;background:#4d5056;"></div>
<div style="left:388.0px;top:457.5px;width:112.5px;height:15.8px;background:#484848;"></div>
<div style="left:388.0px;top:473.3px;width:112.5px;height:34.2px;background:#3c3c3c;"></div>
<div style="left:500.5px;top:457.5px;width:67.5px;height:15.8px;background:#62687a;"></div>
<div style="left:500.5px;top:473.3px;width:67.5px;height:34.2px;background:#40434b;"></div>
<div style="left:568.0px;top:457.5px;width:45.0px;height:15.8px;background:#53565e;"></div>
<div style="left:568.0px;top:473.3px;width:45.0px;height:34.2px;background:#4d5056;"></div>
<div style="left:613.0px;top:457.5px;width:112.5px;height:15.8px;background:#494949;"></div>
<div style="left:613.0px;top:473.3px;width:112.5px;height:34.2px;background:#444444;"></div>
<div style="left:725.5px;top:457.5px;width:106.0px;height:15.8px;background:#50535a;"></div>
<div style="left:725.5px;top:473.3px;width:106.0px;height:34.2px;background:#4d5056;"></div>
<svg style="left:388px;top:473.3px;" width="180" height="34" viewBox="0 0 180 34"><rect x="7.5" y="0" width="7.5" height="34" fill="#ffffff" opacity="0.025"/><rect x="22.5" y="0" width="7.5" height="34" fill="#ffffff" opacity="0.025"/><rect x="37.5" y="0" width="7.5" height="34" fill="#ffffff" opacity="0.025"/><rect x="52.5" y="0" width="7.5" height="34" fill="#ffffff" opacity="0.025"/><rect x="67.5" y="0" width="7.5" height="34" fill="#ffffff" opacity="0.025"/><rect x="82.5" y="0" width="7.5" height="34" fill="#ffffff" opacity="0.025"/><rect x="97.5" y="0" width="7.5" height="34" fill="#ffffff" opacity="0.025"/><rect x="112.5" y="0" width="7.5" height="34" fill="#ffffff" opacity="0.025"/><rect x="127.5" y="0" width="7.5" height="34" fill="#ffffff" opacity="0.025"/><rect x="142.5" y="0" width="7.5" height="34" fill="#ffffff" opacity="0.025"/><rect x="157.5" y="0" width="7.5" height="34" fill="#ffffff" opacity="0.025"/><rect x="172.5" y="0" width="7.5" height="34" fill="#ffffff" opacity="0.025"/></svg>
<div style="left:297.6px;top:473.3px;width:0.8px;height:34.2px;background:rgba(0,0,0,0.07);"></div>
<div style="left:342.6px;top:473.3px;width:0.8px;height:34.2px;background:rgba(0,0,0,0.07);"></div>
<div style="left:432.6px;top:473.3px;width:0.8px;height:34.2px;background:rgba(0,0,0,0.07);"></div>
<div style="left:522.6px;top:473.3px;width:0.8px;height:34.2px;background:rgba(0,0,0,0.07);"></div>
<div style="left:612.6px;top:473.3px;width:0.8px;height:34.2px;background:rgba(0,0,0,0.07);"></div>
<div style="left:657.6px;top:473.3px;width:0.8px;height:34.2px;background:rgba(0,0,0,0.07);"></div>
<div style="left:702.6px;top:473.3px;width:0.8px;height:34.2px;background:rgba(0,0,0,0.07);"></div>
<div style="left:747.6px;top:473.3px;width:0.8px;height:34.2px;background:rgba(0,0,0,0.07);"></div>
<div style="left:792.6px;top:473.3px;width:0.8px;height:34.2px;background:rgba(0,0,0,0.07);"></div>
<div style="left:287.5px;top:473px;width:544.0px;height:0.8px;background:#3a3a3a;"></div>
<div style="left:380.3px;top:457.5px;width:7.7px;height:15.8px;background:#2b2bb0;"></div>
<div style="left:388px;top:457.5px;width:7.4px;height:15.8px;background:#c4202c;"></div>
<div style="left:388px;top:473.3px;width:7.4px;height:21px;background:#7c2c32;"></div>
<div style="left:568.0px;top:457.5px;width:7px;height:15.8px;background:#2a2ac0;"></div>
<div style="left:567.5px;top:473.3px;width:1.2px;height:34.2px;background:#3030b0;"></div>
<div style="left:387.4px;top:473.3px;width:0.8px;height:34.2px;background:#6878a8;"></div>
<div style="left:287.5px;top:457.5px;width:544px;height:15.8px;overflow:hidden;"><div style="left:-10.800000000000011px;top:8.2px;font-size:6.8px;line-height:8.8px;color:#9a9a9a;white-space:nowrap;width:20px;text-align:center;letter-spacing:-0.35px;">-14</div><div style="left:4.199999999999989px;top:8.2px;font-size:6.8px;line-height:8.8px;color:#9a9a9a;white-space:nowrap;width:20px;text-align:center;letter-spacing:-0.35px;">-12</div><div style="left:19.19999999999999px;top:8.2px;font-size:6.8px;line-height:8.8px;color:#9a9a9a;white-space:nowrap;width:20px;text-align:center;letter-spacing:-0.35px;">-10</div><div style="left:34.19999999999999px;top:8.2px;font-size:6.8px;line-height:8.8px;color:#9a9a9a;white-space:nowrap;width:20px;text-align:center;letter-spacing:-0.35px;">-8</div><div style="left:49.19999999999999px;top:8.2px;font-size:6.8px;line-height:8.8px;color:#9a9a9a;white-space:nowrap;width:20px;text-align:center;letter-spacing:-0.35px;">-6</div><div style="left:64.19999999999999px;top:8.2px;font-size:6.8px;line-height:8.8px;color:#9a9a9a;white-space:nowrap;width:20px;text-align:center;letter-spacing:-0.35px;">-4</div><div style="left:79.19999999999999px;top:8.2px;font-size:6.8px;line-height:8.8px;color:#9a9a9a;white-space:nowrap;width:20px;text-align:center;letter-spacing:-0.35px;">-2</div><div style="left:94.19999999999999px;top:8.2px;font-size:6.8px;line-height:8.8px;color:#f0c0c0;white-space:nowrap;width:20px;text-align:center;letter-spacing:-0.35px;">1</div><div style="left:109.19999999999999px;top:8.2px;font-size:6.8px;line-height:8.8px;color:#c4c4c4;white-space:nowrap;width:20px;text-align:center;letter-spacing:-0.35px;">3</div><div style="left:124.19999999999999px;top:8.2px;font-size:6.8px;line-height:8.8px;color:#c4c4c4;white-space:nowrap;width:20px;text-align:center;letter-spacing:-0.35px;">5</div><div style="left:139.2px;top:8.2px;font-size:6.8px;line-height:8.8px;color:#c4c4c4;white-space:nowrap;width:20px;text-align:center;letter-spacing:-0.35px;">7</div><div style="left:154.2px;top:8.2px;font-size:6.8px;line-height:8.8px;color:#c4c4c4;white-space:nowrap;width:20px;text-align:center;letter-spacing:-0.35px;">9</div><div style="left:169.2px;top:8.2px;font-size:6.8px;line-height:8.8px;color:#c4c4c4;white-space:nowrap;width:20px;text-align:center;letter-spacing:-0.35px;">11</div><div style="left:184.2px;top:8.2px;font-size:6.8px;line-height:8.8px;color:#c4c4c4;white-space:nowrap;width:20px;text-align:center;letter-spacing:-0.35px;">13</div><div style="left:199.2px;top:8.2px;font-size:6.8px;line-height:8.8px;color:#c4c4c4;white-space:nowrap;width:20px;text-align:center;letter-spacing:-0.35px;">15</div><div style="left:214.2px;top:8.2px;font-size:6.8px;line-height:8.8px;color:#e6e6e6;white-space:nowrap;width:20px;text-align:center;letter-spacing:-0.35px;">17</div><div style="left:229.20000000000005px;top:8.2px;font-size:6.8px;line-height:8.8px;color:#e6e6e6;white-space:nowrap;width:20px;text-align:center;letter-spacing:-0.35px;">19</div><div style="left:244.20000000000005px;top:8.2px;font-size:6.8px;line-height:8.8px;color:#e6e6e6;white-space:nowrap;width:20px;text-align:center;letter-spacing:-0.35px;">21</div><div style="left:259.20000000000005px;top:8.2px;font-size:6.8px;line-height:8.8px;color:#e6e6e6;white-space:nowrap;width:20px;text-align:center;letter-spacing:-0.35px;">23</div><div style="left:274.20000000000005px;top:8.2px;font-size:6.8px;line-height:8.8px;color:#4848d0;white-space:nowrap;width:20px;text-align:center;letter-spacing:-0.35px;">25</div><div style="left:289.20000000000005px;top:8.2px;font-size:6.8px;line-height:8.8px;color:#9a9a9a;white-space:nowrap;width:20px;text-align:center;letter-spacing:-0.35px;">27</div><div style="left:304.20000000000005px;top:8.2px;font-size:6.8px;line-height:8.8px;color:#9a9a9a;white-space:nowrap;width:20px;text-align:center;letter-spacing:-0.35px;">29</div><div style="left:319.20000000000005px;top:8.2px;font-size:6.8px;line-height:8.8px;color:#c4c4c4;white-space:nowrap;width:20px;text-align:center;letter-spacing:-0.35px;">31</div><div style="left:334.20000000000005px;top:8.2px;font-size:6.8px;line-height:8.8px;color:#c4c4c4;white-space:nowrap;width:20px;text-align:center;letter-spacing:-0.35px;">33</div><div style="left:349.20000000000005px;top:8.2px;font-size:6.8px;line-height:8.8px;color:#c4c4c4;white-space:nowrap;width:20px;text-align:center;letter-spacing:-0.35px;">35</div><div style="left:364.20000000000005px;top:8.2px;font-size:6.8px;line-height:8.8px;color:#c4c4c4;white-space:nowrap;width:20px;text-align:center;letter-spacing:-0.35px;">37</div><div style="left:379.20000000000005px;top:8.2px;font-size:6.8px;line-height:8.8px;color:#c4c4c4;white-space:nowrap;width:20px;text-align:center;letter-spacing:-0.35px;">39</div><div style="left:394.20000000000005px;top:8.2px;font-size:6.8px;line-height:8.8px;color:#c4c4c4;white-space:nowrap;width:20px;text-align:center;letter-spacing:-0.35px;">41</div><div style="left:409.20000000000005px;top:8.2px;font-size:6.8px;line-height:8.8px;color:#c4c4c4;white-space:nowrap;width:20px;text-align:center;letter-spacing:-0.35px;">43</div><div style="left:424.20000000000005px;top:8.2px;font-size:6.8px;line-height:8.8px;color:#c4c4c4;white-space:nowrap;width:20px;text-align:center;letter-spacing:-0.35px;">45</div><div style="left:439.20000000000005px;top:8.2px;font-size:6.8px;line-height:8.8px;color:#c4c4c4;white-space:nowrap;width:20px;text-align:center;letter-spacing:-0.35px;">47</div><div style="left:454.20000000000005px;top:8.2px;font-size:6.8px;line-height:8.8px;color:#c4c4c4;white-space:nowrap;width:20px;text-align:center;letter-spacing:-0.35px;">49</div><div style="left:469.20000000000005px;top:8.2px;font-size:6.8px;line-height:8.8px;color:#c4c4c4;white-space:nowrap;width:20px;text-align:center;letter-spacing:-0.35px;">51</div><div style="left:484.20000000000005px;top:8.2px;font-size:6.8px;line-height:8.8px;color:#c4c4c4;white-space:nowrap;width:20px;text-align:center;letter-spacing:-0.35px;">53</div><div style="left:499.20000000000005px;top:8.2px;font-size:6.8px;line-height:8.8px;color:#c4c4c4;white-space:nowrap;width:20px;text-align:center;letter-spacing:-0.35px;">55</div><div style="left:514.2px;top:8.2px;font-size:6.8px;line-height:8.8px;color:#c4c4c4;white-space:nowrap;width:20px;text-align:center;letter-spacing:-0.35px;">57</div><div style="left:529.2px;top:8.2px;font-size:6.8px;line-height:8.8px;color:#c4c4c4;white-space:nowrap;width:20px;text-align:center;letter-spacing:-0.35px;">59</div><div style="left:214.5px;top:0px;font-size:6.4px;line-height:8.4px;color:#d8d8d8;white-space:nowrap;">1</div><div style="left:327.0px;top:0px;font-size:6.4px;line-height:8.4px;color:#d8d8d8;white-space:nowrap;">2</div><div style="left:439.5px;top:0px;font-size:6.4px;line-height:8.4px;color:#d8d8d8;white-space:nowrap;">3</div><div style="left:102.0px;top:-0.2px;font-size:5px;line-height:7px;color:#fff;white-space:nowrap;font-weight:bold;">1</div></div>
<div style="left:388px;top:474px;width:180px;height:5.6px;border-top:0.8px solid #808080;border-bottom:0.8px solid #808080;"></div>
<div style="left:392.5px;top:474.4px;width:1.3px;height:4.8px;background:#a0a0a0;"></div>
<div style="left:561.5px;top:474.4px;width:1.3px;height:4.8px;background:#a0a0a0;"></div>
<div style="left:388px;top:494.2px;width:32px;height:13.3px;background:#ffffff;"></div>
<div style="left:283px;top:507.5px;width:549px;height:6.5px;background:#444444;"></div>
<div style="left:825px;top:473.3px;width:7px;height:40.7px;background:#444444;"></div>
<div style="left:827px;top:475px;width:3.6px;height:8.5px;background:#626262;border-radius:1.8px;"></div>
<div style="left:220.5px;top:473.3px;width:15px;height:40.7px;background:#4c4c4c;"></div>
<div style="left:235.7px;top:474px;width:51.8px;height:20px;background:#596072;background-image:radial-gradient(rgba(255,255,255,0.05) 0.4px,transparent 0.6px);background-size:1.5px 1.5px;"></div>
<svg style="left:222.5px;top:479.5px;" width="10" height="7" viewBox="0 0 10 7"><path d="M0.5 3.6C2.5 0.2 7.5 0.2 9.5 3.6" fill="none" stroke="#e0e0e0" stroke-width="1.1" stroke-linecap="round" stroke-linejoin="round" /><ellipse cx="5" cy="3.9" rx="3.9" ry="2.6" fill="#e0e0e0"/><circle cx="5" cy="3.7" r="1.5" fill="#4c4c4c"/><circle cx="5" cy="3.7" r="0.8" fill="#e0e0e0"/></svg>
<svg style="left:238.5px;top:478.5px;" width="13" height="11" viewBox="0 0 13 11"><rect x="1.6" y="0.6" width="10" height="8" rx="1.2" fill="#808080" stroke="#d0d0d0" stroke-width="0.8"/><path d="M0.5 2.6v6.6c0 .8.4 1.2 1.2 1.2h7" fill="none" stroke="#d0d0d0" stroke-width="0.8"/><path d="M3.4 2.2h1M5.4 2.2h1M7.4 2.2h1" stroke="#4c4c4c" stroke-width="0.8"/></svg>
<svg style="left:256px;top:480px;" width="9" height="9" viewBox="0 0 9 9"><rect x="0.5" y="0.5" width="8" height="8" rx="0.8" fill="#6a6a6a" stroke="#9a9a9a" stroke-width="0.7"/><path d="M4.5 0.5v8M0.5 4.5h8" stroke="#c0c0c0" stroke-width="0.8"/></svg>
<div style="left:267.3px;top:479.8px;font-size:6.5px;line-height:8.5px;color:#e0e0e0;white-space:nowrap;letter-spacing:-0.45px;width:19.5px;overflow:hidden;-webkit-mask:linear-gradient(90deg,#000 75%,transparent);">Animat</div>
<div style="left:235.7px;top:494px;width:51.8px;height:20px;background:#464646;"></div>
<div style="left:236.6px;top:495.4px;width:31.2px;height:18.6px;background:#ffffff;"></div>
<svg style="left:209px;top:484.5px;" width="6" height="4" viewBox="0 0 6 4"><path d="M0.6 0.6L3 3L5.4 0.6" fill="none" stroke="#8a8a8a" stroke-width="0.8" stroke-linecap="round" stroke-linejoin="round" /></svg>
<svg style="left:209px;top:505px;" width="6" height="8" viewBox="0 0 6 8"><path d="M0.6 0.6L3 3L5.4 0.6M0.6 4L3 6.4L5.4 4" fill="none" stroke="#8a8a8a" stroke-width="0.8" stroke-linecap="round" stroke-linejoin="round" /></svg>
<div style="left:0px;top:513.5px;width:960px;height:1.2px;background:#262626;"></div>
<div style="left:0px;top:514.4px;width:960px;height:26px;background:linear-gradient(90deg,#40182a 0%,#421826 30%,#43141f 62%,#470e16 82%,#4c080c 100%);"></div>
<div style="left:0px;top:514.4px;width:30px;height:26px;background:#480a0f;"></div>
<div style="left:30px;top:514.4px;width:216px;height:26px;background:#6d3137;"></div>
<div style="left:30px;top:514.4px;width:0.8px;height:26px;background:#7c4448;"></div>
<div style="left:246px;top:514px;width:0.8px;height:26px;background:#7c4448;"></div>
<svg style="left:10px;top:522px;" width="11" height="10" viewBox="0 0 11 10"><path d="M0 1.5L4.6 0.8V4.8H0z M5.4 0.7L10.6 0V4.8H5.4z M0 5.5H4.6V9.4L0 8.7z M5.4 5.5H10.6V10.2L5.4 9.5z" fill="#ffffff"/></svg>
<svg style="left:37px;top:521.5px;" width="11" height="12" viewBox="0 0 11 12"><circle cx="6.6" cy="4.6" r="3.6" fill="none" stroke="#e8dcdc" stroke-width="1.1"/><path d="M4 7.4L0.8 10.8" stroke="#e8dcdc" stroke-width="1.2" stroke-linecap="round"/></svg>
<div style="left:55px;top:521.2px;font-size:9.6px;line-height:11.6px;color:#efe4e4;white-space:nowrap;letter-spacing:-0.15px;">Type here to search</div>
<svg style="left:254px;top:521.5px;" width="12" height="12" viewBox="0 0 12 12"><circle cx="6" cy="6" r="4.5" fill="none" stroke="#f4f4f4" stroke-width="1.6"/></svg>
<svg style="left:284px;top:522px;" width="13" height="11" viewBox="0 0 13 11"><rect x="1.6" y="1.8" width="6.4" height="7" fill="none" stroke="#f0f0f0" stroke-width="1.1"/><path d="M0.2 1.8h2M0.2 8.8h2M7.4 1.8h2M7.4 8.8h2" stroke="#f0f0f0" stroke-width="1.1"/><path d="M11 1v8.6" stroke="#f0f0f0" stroke-width="1"/><rect x="10.2" y="3.6" width="1.6" height="1.8" fill="#f0f0f0"/></svg>
<svg style="left:314px;top:519.5px;" width="17" height="15" viewBox="0 0 17 15"><path d="M0.6 6.4L8.5 0.4 16.4 6.4V14.4H0.6z" fill="#1470c8"/><path d="M0.6 6.4H16.4V14.4H0.6z" fill="#28a8ea"/><path d="M2.6 6.4H14.4L8.5 11z" fill="#f4f8fc"/><path d="M0.6 14.4L8.5 8.8 16.4 14.4z" fill="#1a8ce0"/></svg>
<svg style="left:346px;top:520px;" width="15" height="13" viewBox="0 0 15 13"><path d="M0.4 1.2h5l1.2 1.4H14.6V12.4H0.4z" fill="#f4b400"/><path d="M0.4 3.6H14.6V12.4H0.4z" fill="#fcd462"/><path d="M2.8 7h9.4v5.4H2.8z" fill="#2c8ce8"/><path d="M5.2 9.6h4.6v2.8H5.2z" fill="#fcd462"/></svg>
<svg style="left:376px;top:519.5px;" width="15" height="15" viewBox="0 0 15 15"><path d="M0.6 4.4H14.4V14.4H0.6z" fill="#f4f4f4"/><path d="M4.6 4.4V3C4.6 0 10.4 0 10.4 3V4.4" fill="none" stroke="#f4f4f4" stroke-width="1.1"/><rect x="4.8" y="6.6" width="2.4" height="2.4" fill="#f25022"/><rect x="7.8" y="6.6" width="2.4" height="2.4" fill="#7fba00"/><rect x="4.8" y="9.6" width="2.4" height="2.4" fill="#00a4ef"/><rect x="7.8" y="9.6" width="2.4" height="2.4" fill="#ffb900"/></svg>
<svg style="left:407px;top:519.5px;" width="16" height="16" viewBox="0 0 16 16"><defs><linearGradient id="eg" x1="0" y1="0" x2="1" y2="1"><stop offset="0" stop-color="#3cc8a0"/><stop offset="0.5" stop-color="#1c9ad8"/><stop offset="1" stop-color="#0c58b0"/></linearGradient></defs><circle cx="8" cy="8" r="7.4" fill="url(#eg)"/><path d="M3 9C3 5 11 4.4 11.6 8.6 11.8 10 9 10.4 8.6 9.4 7.4 12.6 10.8 14 13.6 12.4 11 16.6 3 15 3 9z" fill="#0a4a98"/><path d="M0.8 7C2 1 11.6-0.6 15 5.6 11.6 2.6 4 3 0.8 7z" fill="#54d8a4"/><circle cx="4.2" cy="11.4" r="2.6" fill="#5a4038"/></svg>
<svg style="left:438.5px;top:519.5px;" width="16" height="16" viewBox="0 0 16 16"><circle cx="8" cy="8" r="7.4" fill="#e8e8e8"/><path d="M8 8L1.6 4.3A7.4 7.4 0 0 1 14.4 4.3z" fill="#e04030"/><path d="M8 8L14.4 4.3A7.4 7.4 0 0 1 8 15.4z" fill="#f8c010"/><path d="M8 8L8 15.4A7.4 7.4 0 0 1 1.6 4.3z" fill="#34a050"/><circle cx="8" cy="8" r="3.4" fill="#f4f4f4"/><circle cx="8" cy="8" r="2.6" fill="#4884e8"/></svg>
<div style="left:433.5px;top:538.5px;width:25.5px;height:1.5px;background:#f0a8b4;"></div>
<div style="left:462px;top:514px;width:30.5px;height:26px;background:#8e1426;"></div>
<div style="left:462px;top:538.5px;width:30.5px;height:1.5px;background:#f0a8b4;"></div>
<svg style="left:469.5px;top:520.5px;" width="14.5" height="13.5" viewBox="0 0 14.5 13.5"><rect x="0" y="0" width="14.5" height="13.5" fill="#e6e6e6"/><path d="M10.4 5.4C8 6.6 4.6 6.4 3.4 4.8 2.4 3.2 5 2 7.6 2.4 10.6 2.8 12.4 4.6 10.8 6.4 9.4 7.8 6.6 8 6.8 9.6 7 10.8 8.6 11.2 9.6 10.4" fill="none" stroke="#181818" stroke-width="1.5" stroke-linecap="round"/></svg>
<svg style="left:765.5px;top:524px;" width="10" height="6" viewBox="0 0 10 6"><path d="M0.8 5L5 0.9 9.2 5" fill="none" stroke="#f0f0f0" stroke-width="1.1"/></svg>
<svg style="left:785px;top:522px;" width="11" height="10" viewBox="0 0 11 10"><path d="M0.6 3.4h1.8L4.8 1v8L2.4 6.6H0.6z" fill="none" stroke="#f0f0f0" stroke-width="0.8"/><path d="M6.4 3.2C7.2 4.2 7.2 5.8 6.4 6.8" fill="none" stroke="#f0f0f0" stroke-width="0.8"/><path d="M8 1.8C9.6 3.6 9.6 6.4 8 8.2" fill="none" stroke="#b09098" stroke-width="0.8"/></svg>
<svg style="left:804.5px;top:523px;" width="12" height="8" viewBox="0 0 12 8"><path d="M2.6 7.4C0 7.4 0 4 2.4 3.8 3 1 6.6 0.6 7.6 3 10 2 11.6 4 10.6 5.6 11.8 6 11.4 7.4 10.4 7.4z" fill="#f0f0f0"/></svg>
<svg style="left:825px;top:524px;" width="11" height="6" viewBox="0 0 11 6"><rect x="0.5" y="0.5" width="9" height="5" fill="none" stroke="#f0f0f0" stroke-width="0.9"/><rect x="1.4" y="1.4" width="4" height="3.2" fill="#f0f0f0"/><rect x="9.8" y="1.8" width="1" height="2.4" fill="#f0f0f0"/></svg>
<svg style="left:845.5px;top:522px;" width="10" height="10" viewBox="0 0 10 10"><path d="M1 9.4A8.4 8.4 0 0 1 9.4 1" fill="none" stroke="#c8b0b4" stroke-width="0.9"/><path d="M3.6 9.4A5.8 5.8 0 0 1 9.4 3.6" fill="none" stroke="#c8b0b4" stroke-width="0.9"/><path d="M6.2 9.4A3.2 3.2 0 0 1 9.4 6.2" fill="none" stroke="#f0f0f0" stroke-width="1"/><circle cx="8.8" cy="8.8" r="0.9" fill="#f0f0f0"/></svg>
<svg style="left:867px;top:521.5px;" width="11" height="12" viewBox="0 0 11 12"><path d="M2 10.4C0.4 10.6 0.4 8.2 2.2 8 4 7.6 5 9 6.4 6 7.4 3.6 6.4 1.8 8 1.2 9.6 0.8 10.2 2.8 8.6 3.6 6.6 4.6 3.6 3.4 3 5.4 2.6 7 5 7.4 6.4 7" fill="none" stroke="#f0f0f0" stroke-width="1" stroke-linecap="round"/></svg>
<div style="left:880px;top:517.3px;font-size:7.7px;line-height:9.7px;color:#f4f4f4;white-space:nowrap;width:50px;text-align:center;letter-spacing:-0.3px;">10:54 AM</div>
<div style="left:880px;top:528.8px;font-size:7.7px;line-height:9.7px;color:#f4f4f4;white-space:nowrap;width:52px;text-align:center;letter-spacing:-0.3px;">3/22/2021</div>
<svg style="left:935px;top:520.5px;" width="13" height="12" viewBox="0 0 13 12"><path d="M0.6 0.6h9.8v8H4.2L1.8 10.6V8.6H0.6z" fill="#f0f0f0"/><path d="M2 2.6h7M2 4.4h7M2 6.2h5" stroke="#4a0c12" stroke-width="0.7"/></svg>
<div style="left:941.5px;top:526px;width:8.6px;height:8.6px;background:#b41828;border:0.7px solid #f0d0d0;border-radius:50%;"></div>
<div style="left:941.5px;top:526.2px;font-size:6.4px;line-height:8.4px;color:#fff;white-space:nowrap;width:8.6px;text-align:center;font-weight:bold;line-height:8px;">6</div>
<div style="left:957.5px;top:514px;width:0.8px;height:26px;background:#6a4048;"></div>
</div></body></html>
